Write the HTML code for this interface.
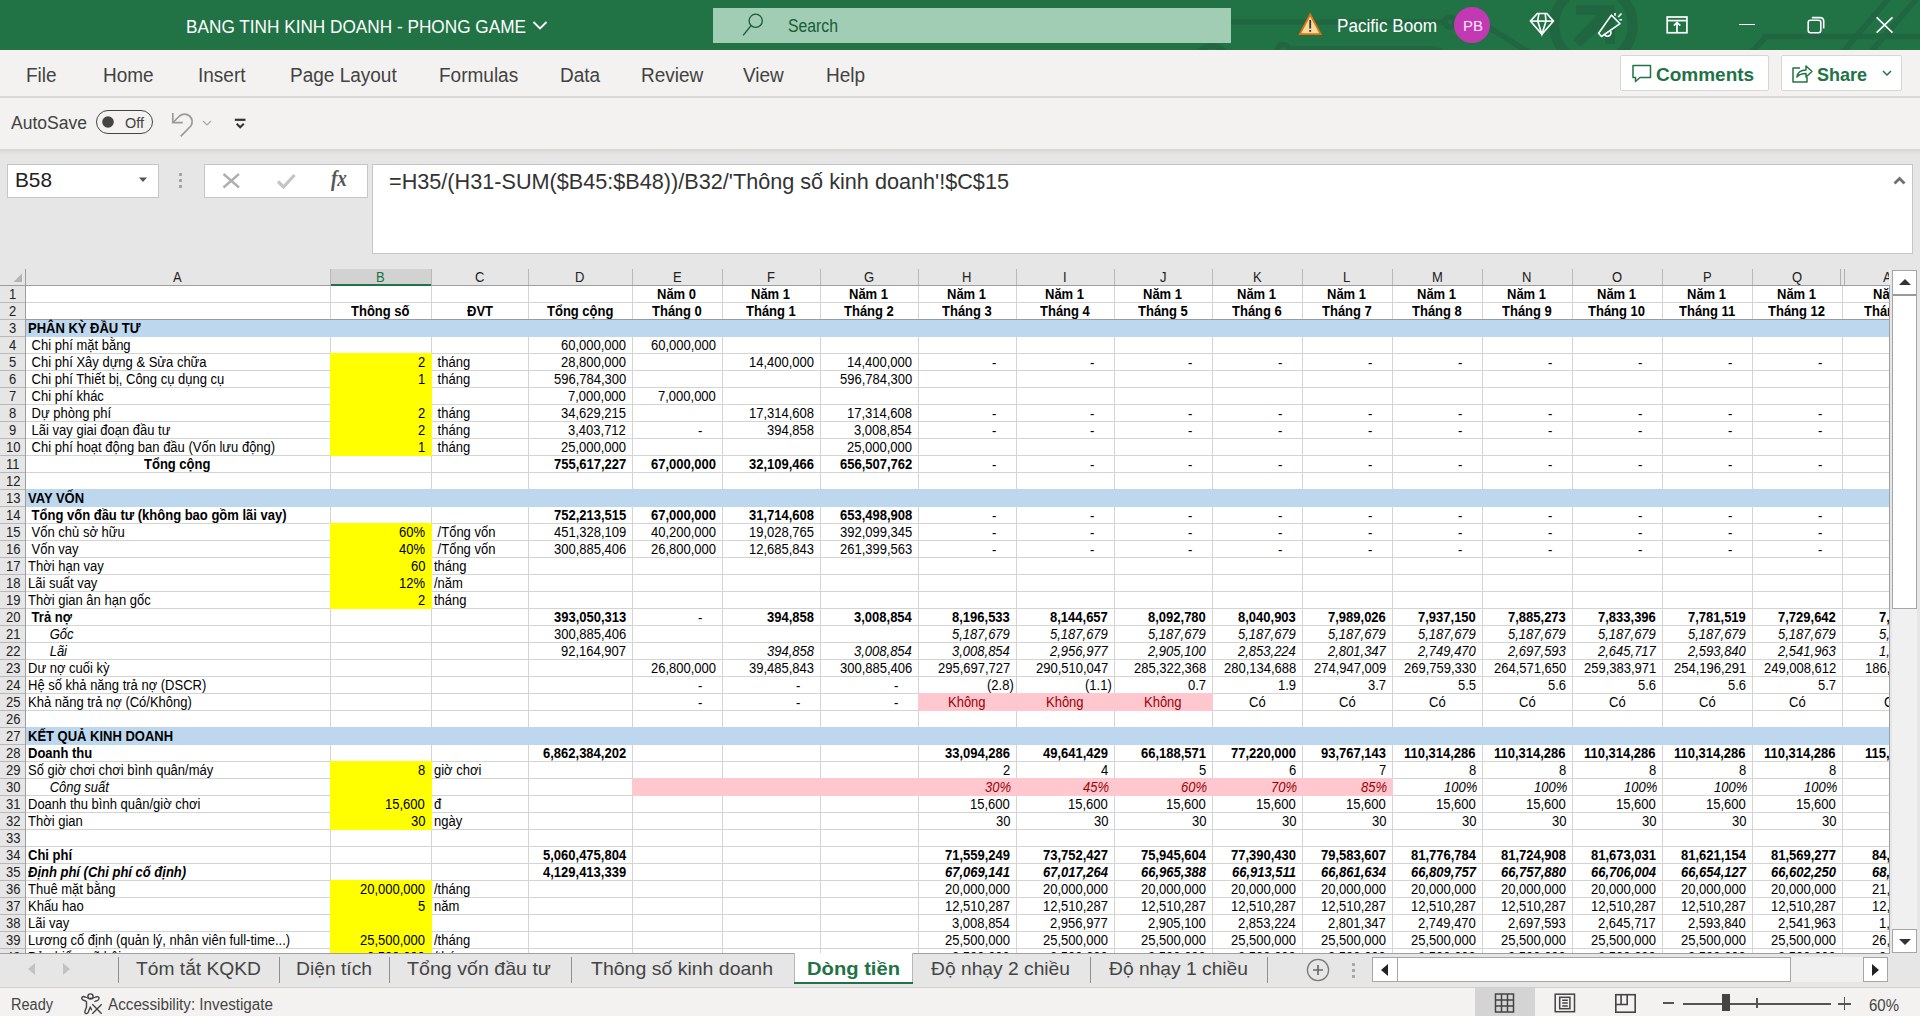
<!DOCTYPE html>
<html><head><meta charset="utf-8"><title>Excel</title><style>
*{margin:0;padding:0;box-sizing:border-box}
html,body{width:1920px;height:1016px;overflow:hidden;background:#f3f2f1;font-family:"Liberation Sans",sans-serif}
.r{position:absolute;display:block}
.t{position:absolute;white-space:pre}
</style></head>
<body>
<div class="r" style="left:0px;top:0px;width:1920px;height:50px;background:#217346;"></div><svg class="r" style="left:0px;top:0px" width="1920" height="50" viewBox="0 0 1920 50"><g stroke="#206640" stroke-width="5.5" fill="none"><path d="M1225 21.9 H1444"/><circle cx="1450" cy="21.9" r="5"/><path d="M1488 27 L1535 56"/><circle cx="1212" cy="64" r="18"/><circle cx="1283" cy="50" r="5.5"/><path d="M1289 49 H1430 Q1440 49 1446 56"/><path d="M1762 36.6 H1925 M1766 36.6 L1748 56"/><path d="M1890 -3 L1842 53 M1918 -3 L1870 53"/></g><circle cx="1593.5" cy="25" r="39.3" stroke="#206640" stroke-width="10" fill="none"/><path d="M1576 5.2 H1614.8 V43.75 H1605.2 V24 L1580.4 46.9 L1573.4 39.6 L1597 14.8 H1576 Z" fill="#206640"/></svg><div class="t" style="left:186.00px;top:17px;font-size:18px;line-height:20px;color:#fff;font-weight:normal;font-style:normal;transform:scaleX(0.9559);transform-origin:0 0;">BANG TINH KINH DOANH - PHONG GAME</div><svg class="r" style="left:530px;top:18px" width="20" height="14" viewBox="0 0 20 14"><path d="M3.5 4 L10 10.5 L16.5 4" stroke="#fff" stroke-width="1.8" fill="none"/></svg><div class="r" style="left:713px;top:8px;width:518px;height:35px;background:#a0cdb4;"></div><svg class="r" style="left:740px;top:12px" width="28" height="28" viewBox="0 0 28 28"><circle cx="15.7" cy="8.8" r="6.6" stroke="#185c34" stroke-width="1.3" fill="none"/><path d="M11 13.6 L3.2 23.4" stroke="#185c34" stroke-width="1.4"/></svg><div class="t" style="left:788.00px;top:16px;font-size:17.5px;line-height:20px;color:#185c34;font-weight:normal;font-style:normal;transform:scaleX(0.9017);transform-origin:0 0;">Search</div><svg class="r" style="left:1290px;top:5px" width="40" height="40" viewBox="0 0 40 40"><path d="M20.2 9.5 L30.6 29.2 L9.8 29.2 Z" fill="#f7da9a" stroke="#dc7314" stroke-width="1.8" stroke-linejoin="miter"/><path d="M20.2 15 V23.5" stroke="#333" stroke-width="1.8"/><rect x="19.3" y="25" width="1.8" height="1.8" fill="#333"/></svg><div class="t" style="left:1337.00px;top:16px;font-size:18px;line-height:20px;color:#fff;font-weight:normal;font-style:normal;transform:scaleX(0.9520);transform-origin:0 0;">Pacific Boom</div><svg class="r" style="left:1454px;top:7px" width="36" height="36" viewBox="0 0 36 36"><circle cx="18" cy="18" r="18" fill="#c239b3"/></svg><div class="t" style="left:1462.50px;top:18px;font-size:14.5px;line-height:16px;color:#fde6fa;font-weight:normal;font-style:normal;transform:scaleX(1.0340);transform-origin:0 0;">PB</div><svg class="r" style="left:1520px;top:5px" width="40" height="40" viewBox="0 0 40 40"><g stroke="#fff" stroke-width="1.6" fill="none" stroke-linejoin="miter"><path d="M17.3 8.5 H26.8 L33.5 16.1 L21.9 29.3 L10.4 16.1 Z"/><path d="M10.4 16.1 H33.5"/><path d="M18.9 8.5 L17.7 16.1 L21.9 29.3 L26.0 16.1 L25.2 8.5"/></g></svg><svg class="r" style="left:1590px;top:5px" width="40" height="40" viewBox="0 0 40 40"><g stroke="#fff" stroke-width="1.6" fill="none" stroke-linejoin="round"><path d="M21.4 10.1 L30 18.7 L11.5 31.5 L8.6 28.3 Z"/><path d="M14.5 29.5 A3.2 3.2 0 1 0 20.5 26"/><path d="M25 8 V10.8 M28.2 12 L31.5 8.5 M29.5 14.8 H32"/></g></svg><svg class="r" style="left:1660px;top:5px" width="40" height="40" viewBox="0 0 40 40"><g stroke="#fff" stroke-width="1.7" fill="none"><rect x="7.2" y="12" width="19.7" height="15.75"/><path d="M7.2 15.6 H26.9"/><path d="M17 27.5 V17 M13.9 20.6 L17 17.4 L20.3 20.6"/></g></svg><div class="r" style="left:1739px;top:23.5px;width:16px;height:1.6px;background:#fff;"></div><svg class="r" style="left:1800px;top:5px" width="40" height="40" viewBox="0 0 40 40"><g stroke="#fff" stroke-width="1.6" fill="none"><rect x="8.2" y="15.2" width="12.6" height="12.5" rx="2.2"/><path d="M11.9 12.6 H20 Q23.7 12.6 23.7 16.3 V23.6"/></g></svg><svg class="r" style="left:1870px;top:10px" width="30" height="30" viewBox="0 0 30 30"><path d="M6.6 7.4 L22.5 22.7 M22.5 7.4 L6.6 22.7" stroke="#fff" stroke-width="1.6"/></svg><div class="r" style="left:0px;top:50px;width:1920px;height:47px;background:#f3f2f1;"></div><div class="t" style="left:26.00px;top:64px;font-size:19.5px;line-height:22px;color:#424242;font-weight:normal;font-style:normal;transform:scaleX(0.9744);transform-origin:0 0;">File</div><div class="t" style="left:103.00px;top:64px;font-size:19.5px;line-height:22px;color:#424242;font-weight:normal;font-style:normal;transform:scaleX(0.9744);transform-origin:0 0;">Home</div><div class="t" style="left:198.00px;top:64px;font-size:19.5px;line-height:22px;color:#424242;font-weight:normal;font-style:normal;transform:scaleX(0.9744);transform-origin:0 0;">Insert</div><div class="t" style="left:290.00px;top:64px;font-size:19.5px;line-height:22px;color:#424242;font-weight:normal;font-style:normal;transform:scaleX(0.9744);transform-origin:0 0;">Page Layout</div><div class="t" style="left:439.00px;top:64px;font-size:19.5px;line-height:22px;color:#424242;font-weight:normal;font-style:normal;transform:scaleX(0.9744);transform-origin:0 0;">Formulas</div><div class="t" style="left:560.00px;top:64px;font-size:19.5px;line-height:22px;color:#424242;font-weight:normal;font-style:normal;transform:scaleX(0.9744);transform-origin:0 0;">Data</div><div class="t" style="left:641.00px;top:64px;font-size:19.5px;line-height:22px;color:#424242;font-weight:normal;font-style:normal;transform:scaleX(0.9744);transform-origin:0 0;">Review</div><div class="t" style="left:743.00px;top:64px;font-size:19.5px;line-height:22px;color:#424242;font-weight:normal;font-style:normal;transform:scaleX(0.9744);transform-origin:0 0;">View</div><div class="t" style="left:826.00px;top:64px;font-size:19.5px;line-height:22px;color:#424242;font-weight:normal;font-style:normal;transform:scaleX(0.9744);transform-origin:0 0;">Help</div><div class="r" style="left:1620px;top:55px;width:149px;height:36px;background:#fff;border:1px solid #d9d7d5;border-radius:2px"></div><svg class="r" style="left:1630px;top:62px" width="24" height="22" viewBox="0 0 24 22"><path d="M3 3.5 H20.5 V15.5 H10 L5.5 19.5 V15.5 H3 Z" stroke="#217346" stroke-width="1.5" fill="none" stroke-linejoin="round"/></svg><div class="t" style="left:1656.00px;top:64px;font-size:19px;line-height:21px;color:#217346;font-weight:bold;font-style:normal;">Comments</div><div class="r" style="left:1781px;top:55px;width:121px;height:36px;background:#fff;border:1px solid #d9d7d5;border-radius:2px"></div><svg class="r" style="left:1789px;top:61px" width="26" height="24" viewBox="0 0 26 24"><g stroke="#217346" stroke-width="1.5" fill="none" stroke-linejoin="round"><path d="M11 7 H4 V21 H18 V16"/><path d="M8 16 Q9 9 17 9 V5 L23 10.5 L17 16 V12.5 Q11 12.5 8 16 Z"/></g></svg><div class="t" style="left:1817.00px;top:64px;font-size:19px;line-height:21px;color:#217346;font-weight:bold;font-style:normal;transform:scaleX(0.9468);transform-origin:0 0;">Share</div><svg class="r" style="left:1880px;top:68px" width="14" height="10" viewBox="0 0 14 10"><path d="M3 3 L7 7 L11 3" stroke="#217346" stroke-width="1.5" fill="none"/></svg><div class="r" style="left:0px;top:96px;width:1920px;height:2px;background:#dad8d6;"></div><div class="r" style="left:0px;top:98px;width:1920px;height:51px;background:#f3f2f1;"></div><div class="t" style="left:11.00px;top:113px;font-size:18px;line-height:20px;color:#424242;font-weight:normal;font-style:normal;transform:scaleX(0.9737);transform-origin:0 0;">AutoSave</div><div class="r" style="left:96px;top:110px;width:57px;height:24px;background:transparent;border:1.3px solid #444;border-radius:12px"></div><svg class="r" style="left:102px;top:116px" width="12" height="12" viewBox="0 0 12 12"><circle cx="6" cy="6" r="5.8" fill="#444"/></svg><div class="t" style="left:125.00px;top:115px;font-size:14px;line-height:16px;color:#424242;font-weight:normal;font-style:normal;transform:scaleX(1.0317);transform-origin:0 0;">Off</div><svg class="r" style="left:160px;top:100px" width="40" height="45" viewBox="0 0 40 45"><g stroke="#9a9a9a" stroke-width="1.7" fill="none"><path d="M12.8 13 V22.7 H22.8"/><path d="M13.5 22 L19.5 16 A7.6 7.6 0 0 1 30.8 26 L20.7 36.3"/></g></svg><svg class="r" style="left:201px;top:118px" width="12" height="10" viewBox="0 0 12 10"><path d="M2 3 L6 7 L10 3" stroke="#a8a8a8" stroke-width="1.2" fill="none"/></svg><svg class="r" style="left:230px;top:110px" width="20" height="20" viewBox="0 0 20 20"><g stroke="#333" fill="none"><path d="M4.8 9.8 H15.5" stroke-width="2.2"/><path d="M6.7 13.7 L10.2 17.3 L13.8 13.7" stroke-width="2"/></g></svg><div class="r" style="left:0;top:149px;width:1920px;height:8px;background:linear-gradient(#d4d4d4,#e6e6e6)"></div><div class="r" style="left:0px;top:149px;width:1920px;height:120px;background:#e6e6e6;"></div><div class="r" style="left:0;top:149px;width:1920px;height:6px;background:linear-gradient(#d6d6d6,#e6e6e6)"></div><div class="r" style="left:7px;top:164px;width:152px;height:34px;background:#fff;border:1px solid #c6c6c6"></div><div class="t" style="left:15.00px;top:168px;font-size:21px;line-height:23px;color:#222;font-weight:normal;font-style:normal;transform:scaleX(0.9902);transform-origin:0 0;">B58</div><svg class="r" style="left:138px;top:176px" width="12" height="8" viewBox="0 0 12 8"><path d="M1 1.5 H9 L5 6 Z" fill="#555"/></svg><div class="r" style="left:179px;top:173px;width:3px;height:3px;background:#a5a5a5;"></div><div class="r" style="left:179px;top:179px;width:3px;height:3px;background:#a5a5a5;"></div><div class="r" style="left:179px;top:185px;width:3px;height:3px;background:#a5a5a5;"></div><div class="r" style="left:204px;top:164px;width:164px;height:34px;background:#fff;border:1px solid #c6c6c6"></div><svg class="r" style="left:220px;top:170px" width="24" height="22" viewBox="0 0 24 22"><path d="M3.5 4 L19 17.5 M19 4 L3.5 17.5" stroke="#b0b0b0" stroke-width="2.4"/></svg><svg class="r" style="left:273px;top:170px" width="28" height="24" viewBox="0 0 28 24"><path d="M5 11.5 L10.5 17 L21.5 5" stroke="#c4c4c4" stroke-width="3.2" fill="none"/></svg><div class="t" style="left:331.00px;top:166px;font-size:23px;line-height:26px;color:#555;font-weight:bold;font-style:italic;transform:scaleX(0.8313);transform-origin:0 0;font-family:'Liberation Serif';">fx</div><div class="r" style="left:372px;top:164px;width:1541px;height:90px;background:#fff;border:1px solid #c6c6c6"></div><div class="t" style="left:389.00px;top:169px;font-size:22.5px;line-height:25px;color:#333;font-weight:normal;font-style:normal;transform:scaleX(0.9618);transform-origin:0 0;">=H35/(H31-SUM($B45:$B48))/B32/&#x27;Thông số kinh doanh&#x27;!$C$15</div><svg class="r" style="left:1892px;top:175px" width="16" height="12" viewBox="0 0 16 12"><path d="M2.5 8.5 L7.5 3.5 L12.5 8.5" stroke="#707070" stroke-width="2.8" fill="none"/></svg><div class="r" style="left:0px;top:269px;width:1889px;height:685px;overflow:hidden;background:#fff"><div class="r" style="left:0px;top:0px;width:1889px;height:16px;background:#e6e6e6;"></div><div class="r" style="left:0px;top:0px;width:25px;height:685px;background:#e6e6e6;"></div><div class="r" style="left:331px;top:0px;width:100px;height:16px;background:#d2d2d2;"></div><div class="r" style="left:330px;top:16px;width:1px;height:669px;background:#d4d4d4;"></div><div class="r" style="left:431px;top:16px;width:1px;height:669px;background:#d4d4d4;"></div><div class="r" style="left:528px;top:16px;width:1px;height:669px;background:#d4d4d4;"></div><div class="r" style="left:632px;top:16px;width:1px;height:669px;background:#d4d4d4;"></div><div class="r" style="left:722px;top:16px;width:1px;height:669px;background:#d4d4d4;"></div><div class="r" style="left:820px;top:16px;width:1px;height:669px;background:#d4d4d4;"></div><div class="r" style="left:918px;top:16px;width:1px;height:669px;background:#d4d4d4;"></div><div class="r" style="left:1016px;top:16px;width:1px;height:669px;background:#d4d4d4;"></div><div class="r" style="left:1114px;top:16px;width:1px;height:669px;background:#d4d4d4;"></div><div class="r" style="left:1212px;top:16px;width:1px;height:669px;background:#d4d4d4;"></div><div class="r" style="left:1302px;top:16px;width:1px;height:669px;background:#d4d4d4;"></div><div class="r" style="left:1392px;top:16px;width:1px;height:669px;background:#d4d4d4;"></div><div class="r" style="left:1482px;top:16px;width:1px;height:669px;background:#d4d4d4;"></div><div class="r" style="left:1572px;top:16px;width:1px;height:669px;background:#d4d4d4;"></div><div class="r" style="left:1662px;top:16px;width:1px;height:669px;background:#d4d4d4;"></div><div class="r" style="left:1752px;top:16px;width:1px;height:669px;background:#d4d4d4;"></div><div class="r" style="left:1842px;top:16px;width:1px;height:669px;background:#d4d4d4;"></div><div class="r" style="left:25px;top:33px;width:1864px;height:1px;background:#d4d4d4;"></div><div class="r" style="left:25px;top:50px;width:1864px;height:1px;background:#d4d4d4;"></div><div class="r" style="left:25px;top:67px;width:1864px;height:1px;background:#d4d4d4;"></div><div class="r" style="left:25px;top:84px;width:1864px;height:1px;background:#d4d4d4;"></div><div class="r" style="left:25px;top:101px;width:1864px;height:1px;background:#d4d4d4;"></div><div class="r" style="left:25px;top:118px;width:1864px;height:1px;background:#d4d4d4;"></div><div class="r" style="left:25px;top:135px;width:1864px;height:1px;background:#d4d4d4;"></div><div class="r" style="left:25px;top:152px;width:1864px;height:1px;background:#d4d4d4;"></div><div class="r" style="left:25px;top:169px;width:1864px;height:1px;background:#d4d4d4;"></div><div class="r" style="left:25px;top:186px;width:1864px;height:1px;background:#d4d4d4;"></div><div class="r" style="left:25px;top:203px;width:1864px;height:1px;background:#d4d4d4;"></div><div class="r" style="left:25px;top:220px;width:1864px;height:1px;background:#d4d4d4;"></div><div class="r" style="left:25px;top:237px;width:1864px;height:1px;background:#d4d4d4;"></div><div class="r" style="left:25px;top:254px;width:1864px;height:1px;background:#d4d4d4;"></div><div class="r" style="left:25px;top:271px;width:1864px;height:1px;background:#d4d4d4;"></div><div class="r" style="left:25px;top:288px;width:1864px;height:1px;background:#d4d4d4;"></div><div class="r" style="left:25px;top:305px;width:1864px;height:1px;background:#d4d4d4;"></div><div class="r" style="left:25px;top:322px;width:1864px;height:1px;background:#d4d4d4;"></div><div class="r" style="left:25px;top:339px;width:1864px;height:1px;background:#d4d4d4;"></div><div class="r" style="left:25px;top:356px;width:1864px;height:1px;background:#d4d4d4;"></div><div class="r" style="left:25px;top:373px;width:1864px;height:1px;background:#d4d4d4;"></div><div class="r" style="left:25px;top:390px;width:1864px;height:1px;background:#d4d4d4;"></div><div class="r" style="left:25px;top:407px;width:1864px;height:1px;background:#d4d4d4;"></div><div class="r" style="left:25px;top:424px;width:1864px;height:1px;background:#d4d4d4;"></div><div class="r" style="left:25px;top:441px;width:1864px;height:1px;background:#d4d4d4;"></div><div class="r" style="left:25px;top:458px;width:1864px;height:1px;background:#d4d4d4;"></div><div class="r" style="left:25px;top:475px;width:1864px;height:1px;background:#d4d4d4;"></div><div class="r" style="left:25px;top:492px;width:1864px;height:1px;background:#d4d4d4;"></div><div class="r" style="left:25px;top:509px;width:1864px;height:1px;background:#d4d4d4;"></div><div class="r" style="left:25px;top:526px;width:1864px;height:1px;background:#d4d4d4;"></div><div class="r" style="left:25px;top:543px;width:1864px;height:1px;background:#d4d4d4;"></div><div class="r" style="left:25px;top:560px;width:1864px;height:1px;background:#d4d4d4;"></div><div class="r" style="left:25px;top:577px;width:1864px;height:1px;background:#d4d4d4;"></div><div class="r" style="left:25px;top:594px;width:1864px;height:1px;background:#d4d4d4;"></div><div class="r" style="left:25px;top:611px;width:1864px;height:1px;background:#d4d4d4;"></div><div class="r" style="left:25px;top:628px;width:1864px;height:1px;background:#d4d4d4;"></div><div class="r" style="left:25px;top:645px;width:1864px;height:1px;background:#d4d4d4;"></div><div class="r" style="left:25px;top:662px;width:1864px;height:1px;background:#d4d4d4;"></div><div class="r" style="left:25px;top:679px;width:1864px;height:1px;background:#d4d4d4;"></div><div class="r" style="left:25px;top:696px;width:1864px;height:1px;background:#d4d4d4;"></div><div class="r" style="left:330px;top:84px;width:102px;height:18px;background:#ffff00;"></div><div class="r" style="left:330px;top:101px;width:102px;height:18px;background:#ffff00;"></div><div class="r" style="left:330px;top:118px;width:102px;height:18px;background:#ffff00;"></div><div class="r" style="left:330px;top:135px;width:102px;height:18px;background:#ffff00;"></div><div class="r" style="left:330px;top:152px;width:102px;height:18px;background:#ffff00;"></div><div class="r" style="left:330px;top:169px;width:102px;height:18px;background:#ffff00;"></div><div class="r" style="left:330px;top:254px;width:102px;height:18px;background:#ffff00;"></div><div class="r" style="left:330px;top:271px;width:102px;height:18px;background:#ffff00;"></div><div class="r" style="left:330px;top:288px;width:102px;height:18px;background:#ffff00;"></div><div class="r" style="left:330px;top:305px;width:102px;height:18px;background:#ffff00;"></div><div class="r" style="left:330px;top:322px;width:102px;height:18px;background:#ffff00;"></div><div class="r" style="left:330px;top:492px;width:102px;height:18px;background:#ffff00;"></div><div class="r" style="left:330px;top:509px;width:102px;height:18px;background:#ffff00;"></div><div class="r" style="left:330px;top:526px;width:102px;height:18px;background:#ffff00;"></div><div class="r" style="left:330px;top:543px;width:102px;height:18px;background:#ffff00;"></div><div class="r" style="left:330px;top:611px;width:102px;height:18px;background:#ffff00;"></div><div class="r" style="left:330px;top:628px;width:102px;height:18px;background:#ffff00;"></div><div class="r" style="left:330px;top:645px;width:102px;height:18px;background:#ffff00;"></div><div class="r" style="left:330px;top:662px;width:102px;height:18px;background:#ffff00;"></div><div class="r" style="left:330px;top:679px;width:102px;height:18px;background:#ffff00;"></div><div class="r" style="left:918px;top:424px;width:99px;height:18px;background:#ffc7ce;"></div><div class="r" style="left:1016px;top:424px;width:99px;height:18px;background:#ffc7ce;"></div><div class="r" style="left:1114px;top:424px;width:99px;height:18px;background:#ffc7ce;"></div><div class="r" style="left:632px;top:509px;width:91px;height:18px;background:#ffc7ce;"></div><div class="r" style="left:722px;top:509px;width:99px;height:18px;background:#ffc7ce;"></div><div class="r" style="left:820px;top:509px;width:99px;height:18px;background:#ffc7ce;"></div><div class="r" style="left:918px;top:509px;width:99px;height:18px;background:#ffc7ce;"></div><div class="r" style="left:1016px;top:509px;width:99px;height:18px;background:#ffc7ce;"></div><div class="r" style="left:1114px;top:509px;width:99px;height:18px;background:#ffc7ce;"></div><div class="r" style="left:1212px;top:509px;width:91px;height:18px;background:#ffc7ce;"></div><div class="r" style="left:1302px;top:509px;width:91px;height:18px;background:#ffc7ce;"></div><div class="r" style="left:25px;top:50px;width:1864px;height:18px;background:#bdd7ee;"></div><div class="r" style="left:25px;top:220px;width:1864px;height:18px;background:#bdd7ee;"></div><div class="r" style="left:25px;top:458px;width:1864px;height:18px;background:#bdd7ee;"></div><div class="r" style="left:25px;top:50px;width:1864px;height:1px;background:#9b9b9b;"></div><div class="r" style="left:330px;top:0px;width:1px;height:16px;background:#b9b9b9;"></div><div class="r" style="left:431px;top:0px;width:1px;height:16px;background:#b9b9b9;"></div><div class="r" style="left:528px;top:0px;width:1px;height:16px;background:#b9b9b9;"></div><div class="r" style="left:632px;top:0px;width:1px;height:16px;background:#b9b9b9;"></div><div class="r" style="left:722px;top:0px;width:1px;height:16px;background:#b9b9b9;"></div><div class="r" style="left:820px;top:0px;width:1px;height:16px;background:#b9b9b9;"></div><div class="r" style="left:918px;top:0px;width:1px;height:16px;background:#b9b9b9;"></div><div class="r" style="left:1016px;top:0px;width:1px;height:16px;background:#b9b9b9;"></div><div class="r" style="left:1114px;top:0px;width:1px;height:16px;background:#b9b9b9;"></div><div class="r" style="left:1212px;top:0px;width:1px;height:16px;background:#b9b9b9;"></div><div class="r" style="left:1302px;top:0px;width:1px;height:16px;background:#b9b9b9;"></div><div class="r" style="left:1392px;top:0px;width:1px;height:16px;background:#b9b9b9;"></div><div class="r" style="left:1482px;top:0px;width:1px;height:16px;background:#b9b9b9;"></div><div class="r" style="left:1572px;top:0px;width:1px;height:16px;background:#b9b9b9;"></div><div class="r" style="left:1662px;top:0px;width:1px;height:16px;background:#b9b9b9;"></div><div class="r" style="left:1752px;top:0px;width:1px;height:16px;background:#b9b9b9;"></div><div class="r" style="left:1840px;top:0px;width:1px;height:16px;background:#b0b0b0;"></div><div class="r" style="left:1844px;top:0px;width:1px;height:16px;background:#b0b0b0;"></div><div class="r" style="left:0px;top:33px;width:25px;height:1px;background:#b9b9b9;"></div><div class="r" style="left:0px;top:50px;width:25px;height:1px;background:#b9b9b9;"></div><div class="r" style="left:0px;top:67px;width:25px;height:1px;background:#b9b9b9;"></div><div class="r" style="left:0px;top:84px;width:25px;height:1px;background:#b9b9b9;"></div><div class="r" style="left:0px;top:101px;width:25px;height:1px;background:#b9b9b9;"></div><div class="r" style="left:0px;top:118px;width:25px;height:1px;background:#b9b9b9;"></div><div class="r" style="left:0px;top:135px;width:25px;height:1px;background:#b9b9b9;"></div><div class="r" style="left:0px;top:152px;width:25px;height:1px;background:#b9b9b9;"></div><div class="r" style="left:0px;top:169px;width:25px;height:1px;background:#b9b9b9;"></div><div class="r" style="left:0px;top:186px;width:25px;height:1px;background:#b9b9b9;"></div><div class="r" style="left:0px;top:203px;width:25px;height:1px;background:#b9b9b9;"></div><div class="r" style="left:0px;top:220px;width:25px;height:1px;background:#b9b9b9;"></div><div class="r" style="left:0px;top:237px;width:25px;height:1px;background:#b9b9b9;"></div><div class="r" style="left:0px;top:254px;width:25px;height:1px;background:#b9b9b9;"></div><div class="r" style="left:0px;top:271px;width:25px;height:1px;background:#b9b9b9;"></div><div class="r" style="left:0px;top:288px;width:25px;height:1px;background:#b9b9b9;"></div><div class="r" style="left:0px;top:305px;width:25px;height:1px;background:#b9b9b9;"></div><div class="r" style="left:0px;top:322px;width:25px;height:1px;background:#b9b9b9;"></div><div class="r" style="left:0px;top:339px;width:25px;height:1px;background:#b9b9b9;"></div><div class="r" style="left:0px;top:356px;width:25px;height:1px;background:#b9b9b9;"></div><div class="r" style="left:0px;top:373px;width:25px;height:1px;background:#b9b9b9;"></div><div class="r" style="left:0px;top:390px;width:25px;height:1px;background:#b9b9b9;"></div><div class="r" style="left:0px;top:407px;width:25px;height:1px;background:#b9b9b9;"></div><div class="r" style="left:0px;top:424px;width:25px;height:1px;background:#b9b9b9;"></div><div class="r" style="left:0px;top:441px;width:25px;height:1px;background:#b9b9b9;"></div><div class="r" style="left:0px;top:458px;width:25px;height:1px;background:#b9b9b9;"></div><div class="r" style="left:0px;top:475px;width:25px;height:1px;background:#b9b9b9;"></div><div class="r" style="left:0px;top:492px;width:25px;height:1px;background:#b9b9b9;"></div><div class="r" style="left:0px;top:509px;width:25px;height:1px;background:#b9b9b9;"></div><div class="r" style="left:0px;top:526px;width:25px;height:1px;background:#b9b9b9;"></div><div class="r" style="left:0px;top:543px;width:25px;height:1px;background:#b9b9b9;"></div><div class="r" style="left:0px;top:560px;width:25px;height:1px;background:#b9b9b9;"></div><div class="r" style="left:0px;top:577px;width:25px;height:1px;background:#b9b9b9;"></div><div class="r" style="left:0px;top:594px;width:25px;height:1px;background:#b9b9b9;"></div><div class="r" style="left:0px;top:611px;width:25px;height:1px;background:#b9b9b9;"></div><div class="r" style="left:0px;top:628px;width:25px;height:1px;background:#b9b9b9;"></div><div class="r" style="left:0px;top:645px;width:25px;height:1px;background:#b9b9b9;"></div><div class="r" style="left:0px;top:662px;width:25px;height:1px;background:#b9b9b9;"></div><div class="r" style="left:0px;top:679px;width:25px;height:1px;background:#b9b9b9;"></div><div class="r" style="left:0px;top:696px;width:25px;height:1px;background:#b9b9b9;"></div><div class="r" style="left:25px;top:0px;width:1px;height:685px;background:#9e9e9e;"></div><div class="r" style="left:0px;top:16px;width:1889px;height:1px;background:#9e9e9e;"></div><div class="r" style="left:331px;top:15px;width:100px;height:2px;background:#217346;"></div><svg class="r" style="left:12px;top:3px" width="12" height="12" viewBox="0 0 12 12"><path d="M10 1.5 V10 H1.5 Z" fill="#b4b4b4"/></svg><div class="t" style="left:173.16px;top:1px;font-size:13.8px;line-height:15px;color:#222;font-weight:normal;font-style:normal;transform:scaleX(0.9420);transform-origin:0 0;">A</div><div class="t" style="left:376.16px;top:1px;font-size:13.8px;line-height:15px;color:#217346;font-weight:normal;font-style:normal;transform:scaleX(0.9420);transform-origin:0 0;">B</div><div class="t" style="left:474.81px;top:1px;font-size:13.8px;line-height:15px;color:#222;font-weight:normal;font-style:normal;transform:scaleX(0.9420);transform-origin:0 0;">C</div><div class="t" style="left:575.31px;top:1px;font-size:13.8px;line-height:15px;color:#222;font-weight:normal;font-style:normal;transform:scaleX(0.9420);transform-origin:0 0;">D</div><div class="t" style="left:672.66px;top:1px;font-size:13.8px;line-height:15px;color:#222;font-weight:normal;font-style:normal;transform:scaleX(0.9420);transform-origin:0 0;">E</div><div class="t" style="left:767.03px;top:1px;font-size:13.8px;line-height:15px;color:#222;font-weight:normal;font-style:normal;transform:scaleX(0.9420);transform-origin:0 0;">F</div><div class="t" style="left:863.94px;top:1px;font-size:13.8px;line-height:15px;color:#222;font-weight:normal;font-style:normal;transform:scaleX(0.9420);transform-origin:0 0;">G</div><div class="t" style="left:962.31px;top:1px;font-size:13.8px;line-height:15px;color:#222;font-weight:normal;font-style:normal;transform:scaleX(0.9420);transform-origin:0 0;">H</div><div class="t" style="left:1063.19px;top:1px;font-size:13.8px;line-height:15px;color:#222;font-weight:normal;font-style:normal;transform:scaleX(0.9420);transform-origin:0 0;">I</div><div class="t" style="left:1159.75px;top:1px;font-size:13.8px;line-height:15px;color:#222;font-weight:normal;font-style:normal;transform:scaleX(0.9420);transform-origin:0 0;">J</div><div class="t" style="left:1252.66px;top:1px;font-size:13.8px;line-height:15px;color:#222;font-weight:normal;font-style:normal;transform:scaleX(0.9420);transform-origin:0 0;">K</div><div class="t" style="left:1343.38px;top:1px;font-size:13.8px;line-height:15px;color:#222;font-weight:normal;font-style:normal;transform:scaleX(0.9420);transform-origin:0 0;">L</div><div class="t" style="left:1431.59px;top:1px;font-size:13.8px;line-height:15px;color:#222;font-weight:normal;font-style:normal;transform:scaleX(0.9420);transform-origin:0 0;">M</div><div class="t" style="left:1522.31px;top:1px;font-size:13.8px;line-height:15px;color:#222;font-weight:normal;font-style:normal;transform:scaleX(0.9420);transform-origin:0 0;">N</div><div class="t" style="left:1611.94px;top:1px;font-size:13.8px;line-height:15px;color:#222;font-weight:normal;font-style:normal;transform:scaleX(0.9420);transform-origin:0 0;">O</div><div class="t" style="left:1702.66px;top:1px;font-size:13.8px;line-height:15px;color:#222;font-weight:normal;font-style:normal;transform:scaleX(0.9420);transform-origin:0 0;">P</div><div class="t" style="left:1791.94px;top:1px;font-size:13.8px;line-height:15px;color:#222;font-weight:normal;font-style:normal;transform:scaleX(0.9420);transform-origin:0 0;">Q</div><div class="t" style="left:1883.47px;top:1px;font-size:13.8px;line-height:15px;color:#222;font-weight:normal;font-style:normal;transform:scaleX(0.9420);transform-origin:0 0;">AD</div><div class="t" style="left:9.38px;top:18px;font-size:13.8px;line-height:15px;color:#222;font-weight:normal;font-style:normal;transform:scaleX(0.9420);transform-origin:0 0;">1</div><div class="t" style="left:9.38px;top:35px;font-size:13.8px;line-height:15px;color:#222;font-weight:normal;font-style:normal;transform:scaleX(0.9420);transform-origin:0 0;">2</div><div class="t" style="left:9.38px;top:52px;font-size:13.8px;line-height:15px;color:#222;font-weight:normal;font-style:normal;transform:scaleX(0.9420);transform-origin:0 0;">3</div><div class="t" style="left:9.38px;top:69px;font-size:13.8px;line-height:15px;color:#222;font-weight:normal;font-style:normal;transform:scaleX(0.9420);transform-origin:0 0;">4</div><div class="t" style="left:9.38px;top:86px;font-size:13.8px;line-height:15px;color:#222;font-weight:normal;font-style:normal;transform:scaleX(0.9420);transform-origin:0 0;">5</div><div class="t" style="left:9.38px;top:103px;font-size:13.8px;line-height:15px;color:#222;font-weight:normal;font-style:normal;transform:scaleX(0.9420);transform-origin:0 0;">6</div><div class="t" style="left:9.38px;top:120px;font-size:13.8px;line-height:15px;color:#222;font-weight:normal;font-style:normal;transform:scaleX(0.9420);transform-origin:0 0;">7</div><div class="t" style="left:9.38px;top:137px;font-size:13.8px;line-height:15px;color:#222;font-weight:normal;font-style:normal;transform:scaleX(0.9420);transform-origin:0 0;">8</div><div class="t" style="left:9.38px;top:154px;font-size:13.8px;line-height:15px;color:#222;font-weight:normal;font-style:normal;transform:scaleX(0.9420);transform-origin:0 0;">9</div><div class="t" style="left:5.77px;top:171px;font-size:13.8px;line-height:15px;color:#222;font-weight:normal;font-style:normal;transform:scaleX(0.9420);transform-origin:0 0;">10</div><div class="t" style="left:6.25px;top:188px;font-size:13.8px;line-height:15px;color:#222;font-weight:normal;font-style:normal;transform:scaleX(0.9420);transform-origin:0 0;">11</div><div class="t" style="left:5.77px;top:205px;font-size:13.8px;line-height:15px;color:#222;font-weight:normal;font-style:normal;transform:scaleX(0.9420);transform-origin:0 0;">12</div><div class="t" style="left:5.77px;top:222px;font-size:13.8px;line-height:15px;color:#222;font-weight:normal;font-style:normal;transform:scaleX(0.9420);transform-origin:0 0;">13</div><div class="t" style="left:5.77px;top:239px;font-size:13.8px;line-height:15px;color:#222;font-weight:normal;font-style:normal;transform:scaleX(0.9420);transform-origin:0 0;">14</div><div class="t" style="left:5.77px;top:256px;font-size:13.8px;line-height:15px;color:#222;font-weight:normal;font-style:normal;transform:scaleX(0.9420);transform-origin:0 0;">15</div><div class="t" style="left:5.77px;top:273px;font-size:13.8px;line-height:15px;color:#222;font-weight:normal;font-style:normal;transform:scaleX(0.9420);transform-origin:0 0;">16</div><div class="t" style="left:5.77px;top:290px;font-size:13.8px;line-height:15px;color:#222;font-weight:normal;font-style:normal;transform:scaleX(0.9420);transform-origin:0 0;">17</div><div class="t" style="left:5.77px;top:307px;font-size:13.8px;line-height:15px;color:#222;font-weight:normal;font-style:normal;transform:scaleX(0.9420);transform-origin:0 0;">18</div><div class="t" style="left:5.77px;top:324px;font-size:13.8px;line-height:15px;color:#222;font-weight:normal;font-style:normal;transform:scaleX(0.9420);transform-origin:0 0;">19</div><div class="t" style="left:5.77px;top:341px;font-size:13.8px;line-height:15px;color:#222;font-weight:normal;font-style:normal;transform:scaleX(0.9420);transform-origin:0 0;">20</div><div class="t" style="left:5.77px;top:358px;font-size:13.8px;line-height:15px;color:#222;font-weight:normal;font-style:normal;transform:scaleX(0.9420);transform-origin:0 0;">21</div><div class="t" style="left:5.77px;top:375px;font-size:13.8px;line-height:15px;color:#222;font-weight:normal;font-style:normal;transform:scaleX(0.9420);transform-origin:0 0;">22</div><div class="t" style="left:5.77px;top:392px;font-size:13.8px;line-height:15px;color:#222;font-weight:normal;font-style:normal;transform:scaleX(0.9420);transform-origin:0 0;">23</div><div class="t" style="left:5.77px;top:409px;font-size:13.8px;line-height:15px;color:#222;font-weight:normal;font-style:normal;transform:scaleX(0.9420);transform-origin:0 0;">24</div><div class="t" style="left:5.77px;top:426px;font-size:13.8px;line-height:15px;color:#222;font-weight:normal;font-style:normal;transform:scaleX(0.9420);transform-origin:0 0;">25</div><div class="t" style="left:5.77px;top:443px;font-size:13.8px;line-height:15px;color:#222;font-weight:normal;font-style:normal;transform:scaleX(0.9420);transform-origin:0 0;">26</div><div class="t" style="left:5.77px;top:460px;font-size:13.8px;line-height:15px;color:#222;font-weight:normal;font-style:normal;transform:scaleX(0.9420);transform-origin:0 0;">27</div><div class="t" style="left:5.77px;top:477px;font-size:13.8px;line-height:15px;color:#222;font-weight:normal;font-style:normal;transform:scaleX(0.9420);transform-origin:0 0;">28</div><div class="t" style="left:5.77px;top:494px;font-size:13.8px;line-height:15px;color:#222;font-weight:normal;font-style:normal;transform:scaleX(0.9420);transform-origin:0 0;">29</div><div class="t" style="left:5.77px;top:511px;font-size:13.8px;line-height:15px;color:#222;font-weight:normal;font-style:normal;transform:scaleX(0.9420);transform-origin:0 0;">30</div><div class="t" style="left:5.77px;top:528px;font-size:13.8px;line-height:15px;color:#222;font-weight:normal;font-style:normal;transform:scaleX(0.9420);transform-origin:0 0;">31</div><div class="t" style="left:5.77px;top:545px;font-size:13.8px;line-height:15px;color:#222;font-weight:normal;font-style:normal;transform:scaleX(0.9420);transform-origin:0 0;">32</div><div class="t" style="left:5.77px;top:562px;font-size:13.8px;line-height:15px;color:#222;font-weight:normal;font-style:normal;transform:scaleX(0.9420);transform-origin:0 0;">33</div><div class="t" style="left:5.77px;top:579px;font-size:13.8px;line-height:15px;color:#222;font-weight:normal;font-style:normal;transform:scaleX(0.9420);transform-origin:0 0;">34</div><div class="t" style="left:5.77px;top:596px;font-size:13.8px;line-height:15px;color:#222;font-weight:normal;font-style:normal;transform:scaleX(0.9420);transform-origin:0 0;">35</div><div class="t" style="left:5.77px;top:613px;font-size:13.8px;line-height:15px;color:#222;font-weight:normal;font-style:normal;transform:scaleX(0.9420);transform-origin:0 0;">36</div><div class="t" style="left:5.77px;top:630px;font-size:13.8px;line-height:15px;color:#222;font-weight:normal;font-style:normal;transform:scaleX(0.9420);transform-origin:0 0;">37</div><div class="t" style="left:5.77px;top:647px;font-size:13.8px;line-height:15px;color:#222;font-weight:normal;font-style:normal;transform:scaleX(0.9420);transform-origin:0 0;">38</div><div class="t" style="left:5.77px;top:664px;font-size:13.8px;line-height:15px;color:#222;font-weight:normal;font-style:normal;transform:scaleX(0.9420);transform-origin:0 0;">39</div><div class="t" style="left:5.77px;top:681px;font-size:13.8px;line-height:15px;color:#222;font-weight:normal;font-style:normal;transform:scaleX(0.9420);transform-origin:0 0;">40</div><div class="t" style="left:657.49px;top:18px;font-size:13.8px;line-height:15px;color:#000;font-weight:bold;font-style:normal;transform:scaleX(0.9420);transform-origin:0 0;">Năm 0</div><div class="t" style="left:751.49px;top:18px;font-size:13.8px;line-height:15px;color:#000;font-weight:bold;font-style:normal;transform:scaleX(0.9420);transform-origin:0 0;">Năm 1</div><div class="t" style="left:849.49px;top:18px;font-size:13.8px;line-height:15px;color:#000;font-weight:bold;font-style:normal;transform:scaleX(0.9420);transform-origin:0 0;">Năm 1</div><div class="t" style="left:947.49px;top:18px;font-size:13.8px;line-height:15px;color:#000;font-weight:bold;font-style:normal;transform:scaleX(0.9420);transform-origin:0 0;">Năm 1</div><div class="t" style="left:1045.49px;top:18px;font-size:13.8px;line-height:15px;color:#000;font-weight:bold;font-style:normal;transform:scaleX(0.9420);transform-origin:0 0;">Năm 1</div><div class="t" style="left:1143.49px;top:18px;font-size:13.8px;line-height:15px;color:#000;font-weight:bold;font-style:normal;transform:scaleX(0.9420);transform-origin:0 0;">Năm 1</div><div class="t" style="left:1237.49px;top:18px;font-size:13.8px;line-height:15px;color:#000;font-weight:bold;font-style:normal;transform:scaleX(0.9420);transform-origin:0 0;">Năm 1</div><div class="t" style="left:1327.49px;top:18px;font-size:13.8px;line-height:15px;color:#000;font-weight:bold;font-style:normal;transform:scaleX(0.9420);transform-origin:0 0;">Năm 1</div><div class="t" style="left:1417.49px;top:18px;font-size:13.8px;line-height:15px;color:#000;font-weight:bold;font-style:normal;transform:scaleX(0.9420);transform-origin:0 0;">Năm 1</div><div class="t" style="left:1507.49px;top:18px;font-size:13.8px;line-height:15px;color:#000;font-weight:bold;font-style:normal;transform:scaleX(0.9420);transform-origin:0 0;">Năm 1</div><div class="t" style="left:1597.49px;top:18px;font-size:13.8px;line-height:15px;color:#000;font-weight:bold;font-style:normal;transform:scaleX(0.9420);transform-origin:0 0;">Năm 1</div><div class="t" style="left:1687.49px;top:18px;font-size:13.8px;line-height:15px;color:#000;font-weight:bold;font-style:normal;transform:scaleX(0.9420);transform-origin:0 0;">Năm 1</div><div class="t" style="left:1777.49px;top:18px;font-size:13.8px;line-height:15px;color:#000;font-weight:bold;font-style:normal;transform:scaleX(0.9420);transform-origin:0 0;">Năm 1</div><div class="t" style="left:1872.99px;top:18px;font-size:13.8px;line-height:15px;color:#000;font-weight:bold;font-style:normal;transform:scaleX(0.9420);transform-origin:0 0;">Năm 1</div><div class="t" style="left:351.26px;top:35px;font-size:13.8px;line-height:15px;color:#000;font-weight:bold;font-style:normal;transform:scaleX(0.9420);transform-origin:0 0;">Thông số</div><div class="t" style="left:466.50px;top:35px;font-size:13.8px;line-height:15px;color:#000;font-weight:bold;font-style:normal;transform:scaleX(0.9420);transform-origin:0 0;">ĐVT</div><div class="t" style="left:546.79px;top:35px;font-size:13.8px;line-height:15px;color:#000;font-weight:bold;font-style:normal;transform:scaleX(0.9420);transform-origin:0 0;">Tổng cộng</div><div class="t" style="left:652.08px;top:35px;font-size:13.8px;line-height:15px;color:#000;font-weight:bold;font-style:normal;transform:scaleX(0.9420);transform-origin:0 0;">Tháng 0</div><div class="t" style="left:746.08px;top:35px;font-size:13.8px;line-height:15px;color:#000;font-weight:bold;font-style:normal;transform:scaleX(0.9420);transform-origin:0 0;">Tháng 1</div><div class="t" style="left:844.08px;top:35px;font-size:13.8px;line-height:15px;color:#000;font-weight:bold;font-style:normal;transform:scaleX(0.9420);transform-origin:0 0;">Tháng 2</div><div class="t" style="left:942.08px;top:35px;font-size:13.8px;line-height:15px;color:#000;font-weight:bold;font-style:normal;transform:scaleX(0.9420);transform-origin:0 0;">Tháng 3</div><div class="t" style="left:1040.08px;top:35px;font-size:13.8px;line-height:15px;color:#000;font-weight:bold;font-style:normal;transform:scaleX(0.9420);transform-origin:0 0;">Tháng 4</div><div class="t" style="left:1138.08px;top:35px;font-size:13.8px;line-height:15px;color:#000;font-weight:bold;font-style:normal;transform:scaleX(0.9420);transform-origin:0 0;">Tháng 5</div><div class="t" style="left:1232.08px;top:35px;font-size:13.8px;line-height:15px;color:#000;font-weight:bold;font-style:normal;transform:scaleX(0.9420);transform-origin:0 0;">Tháng 6</div><div class="t" style="left:1322.08px;top:35px;font-size:13.8px;line-height:15px;color:#000;font-weight:bold;font-style:normal;transform:scaleX(0.9420);transform-origin:0 0;">Tháng 7</div><div class="t" style="left:1412.08px;top:35px;font-size:13.8px;line-height:15px;color:#000;font-weight:bold;font-style:normal;transform:scaleX(0.9420);transform-origin:0 0;">Tháng 8</div><div class="t" style="left:1502.08px;top:35px;font-size:13.8px;line-height:15px;color:#000;font-weight:bold;font-style:normal;transform:scaleX(0.9420);transform-origin:0 0;">Tháng 9</div><div class="t" style="left:1588.47px;top:35px;font-size:13.8px;line-height:15px;color:#000;font-weight:bold;font-style:normal;transform:scaleX(0.9420);transform-origin:0 0;">Tháng 10</div><div class="t" style="left:1678.83px;top:35px;font-size:13.8px;line-height:15px;color:#000;font-weight:bold;font-style:normal;transform:scaleX(0.9420);transform-origin:0 0;">Tháng 11</div><div class="t" style="left:1768.47px;top:35px;font-size:13.8px;line-height:15px;color:#000;font-weight:bold;font-style:normal;transform:scaleX(0.9420);transform-origin:0 0;">Tháng 12</div><div class="t" style="left:1863.97px;top:35px;font-size:13.8px;line-height:15px;color:#000;font-weight:bold;font-style:normal;transform:scaleX(0.9420);transform-origin:0 0;">Tháng 13</div><div class="t" style="left:28.00px;top:52px;font-size:13.8px;line-height:15px;color:#000;font-weight:bold;font-style:normal;transform:scaleX(0.9420);transform-origin:0 0;">PHÂN KỲ ĐẦU TƯ</div><div class="t" style="left:28.00px;top:69px;font-size:13.8px;line-height:15px;color:#000;font-weight:normal;font-style:normal;transform:scaleX(0.9420);transform-origin:0 0;"> Chi phí mặt bằng</div><div class="t" style="left:560.94px;top:69px;font-size:13.8px;line-height:15px;color:#000;font-weight:normal;font-style:normal;transform:scaleX(0.9420);transform-origin:0 0;">60,000,000</div><div class="t" style="left:650.94px;top:69px;font-size:13.8px;line-height:15px;color:#000;font-weight:normal;font-style:normal;transform:scaleX(0.9420);transform-origin:0 0;">60,000,000</div><div class="t" style="left:28.00px;top:86px;font-size:13.8px;line-height:15px;color:#000;font-weight:normal;font-style:normal;transform:scaleX(0.9420);transform-origin:0 0;"> Chi phí Xây dựng &amp; Sửa chữa</div><div class="t" style="left:417.77px;top:86px;font-size:13.8px;line-height:15px;color:#000;font-weight:normal;font-style:normal;transform:scaleX(0.9420);transform-origin:0 0;">2</div><div class="t" style="left:434.00px;top:86px;font-size:13.8px;line-height:15px;color:#000;font-weight:normal;font-style:normal;transform:scaleX(0.9420);transform-origin:0 0;"> tháng</div><div class="t" style="left:560.94px;top:86px;font-size:13.8px;line-height:15px;color:#000;font-weight:normal;font-style:normal;transform:scaleX(0.9420);transform-origin:0 0;">28,800,000</div><div class="t" style="left:748.94px;top:86px;font-size:13.8px;line-height:15px;color:#000;font-weight:normal;font-style:normal;transform:scaleX(0.9420);transform-origin:0 0;">14,400,000</div><div class="t" style="left:846.94px;top:86px;font-size:13.8px;line-height:15px;color:#000;font-weight:normal;font-style:normal;transform:scaleX(0.9420);transform-origin:0 0;">14,400,000</div><div class="t" style="left:991.67px;top:87px;font-size:13.8px;line-height:15px;color:#000;font-weight:normal;font-style:normal;transform:scaleX(0.9420);transform-origin:0 0;">-</div><div class="t" style="left:1089.67px;top:87px;font-size:13.8px;line-height:15px;color:#000;font-weight:normal;font-style:normal;transform:scaleX(0.9420);transform-origin:0 0;">-</div><div class="t" style="left:1187.67px;top:87px;font-size:13.8px;line-height:15px;color:#000;font-weight:normal;font-style:normal;transform:scaleX(0.9420);transform-origin:0 0;">-</div><div class="t" style="left:1277.67px;top:87px;font-size:13.8px;line-height:15px;color:#000;font-weight:normal;font-style:normal;transform:scaleX(0.9420);transform-origin:0 0;">-</div><div class="t" style="left:1367.67px;top:87px;font-size:13.8px;line-height:15px;color:#000;font-weight:normal;font-style:normal;transform:scaleX(0.9420);transform-origin:0 0;">-</div><div class="t" style="left:1457.67px;top:87px;font-size:13.8px;line-height:15px;color:#000;font-weight:normal;font-style:normal;transform:scaleX(0.9420);transform-origin:0 0;">-</div><div class="t" style="left:1547.67px;top:87px;font-size:13.8px;line-height:15px;color:#000;font-weight:normal;font-style:normal;transform:scaleX(0.9420);transform-origin:0 0;">-</div><div class="t" style="left:1637.67px;top:87px;font-size:13.8px;line-height:15px;color:#000;font-weight:normal;font-style:normal;transform:scaleX(0.9420);transform-origin:0 0;">-</div><div class="t" style="left:1727.67px;top:87px;font-size:13.8px;line-height:15px;color:#000;font-weight:normal;font-style:normal;transform:scaleX(0.9420);transform-origin:0 0;">-</div><div class="t" style="left:1817.67px;top:87px;font-size:13.8px;line-height:15px;color:#000;font-weight:normal;font-style:normal;transform:scaleX(0.9420);transform-origin:0 0;">-</div><div class="t" style="left:28.00px;top:103px;font-size:13.8px;line-height:15px;color:#000;font-weight:normal;font-style:normal;transform:scaleX(0.9420);transform-origin:0 0;"> Chi phí Thiết bị, Công cụ dụng cụ</div><div class="t" style="left:417.77px;top:103px;font-size:13.8px;line-height:15px;color:#000;font-weight:normal;font-style:normal;transform:scaleX(0.9420);transform-origin:0 0;">1</div><div class="t" style="left:434.00px;top:103px;font-size:13.8px;line-height:15px;color:#000;font-weight:normal;font-style:normal;transform:scaleX(0.9420);transform-origin:0 0;"> tháng</div><div class="t" style="left:553.71px;top:103px;font-size:13.8px;line-height:15px;color:#000;font-weight:normal;font-style:normal;transform:scaleX(0.9420);transform-origin:0 0;">596,784,300</div><div class="t" style="left:839.71px;top:103px;font-size:13.8px;line-height:15px;color:#000;font-weight:normal;font-style:normal;transform:scaleX(0.9420);transform-origin:0 0;">596,784,300</div><div class="t" style="left:28.00px;top:120px;font-size:13.8px;line-height:15px;color:#000;font-weight:normal;font-style:normal;transform:scaleX(0.9420);transform-origin:0 0;"> Chi phí khác</div><div class="t" style="left:568.17px;top:120px;font-size:13.8px;line-height:15px;color:#000;font-weight:normal;font-style:normal;transform:scaleX(0.9420);transform-origin:0 0;">7,000,000</div><div class="t" style="left:658.17px;top:120px;font-size:13.8px;line-height:15px;color:#000;font-weight:normal;font-style:normal;transform:scaleX(0.9420);transform-origin:0 0;">7,000,000</div><div class="t" style="left:28.00px;top:137px;font-size:13.8px;line-height:15px;color:#000;font-weight:normal;font-style:normal;transform:scaleX(0.9420);transform-origin:0 0;"> Dự phòng phí</div><div class="t" style="left:417.77px;top:137px;font-size:13.8px;line-height:15px;color:#000;font-weight:normal;font-style:normal;transform:scaleX(0.9420);transform-origin:0 0;">2</div><div class="t" style="left:434.00px;top:137px;font-size:13.8px;line-height:15px;color:#000;font-weight:normal;font-style:normal;transform:scaleX(0.9420);transform-origin:0 0;"> tháng</div><div class="t" style="left:560.94px;top:137px;font-size:13.8px;line-height:15px;color:#000;font-weight:normal;font-style:normal;transform:scaleX(0.9420);transform-origin:0 0;">34,629,215</div><div class="t" style="left:748.94px;top:137px;font-size:13.8px;line-height:15px;color:#000;font-weight:normal;font-style:normal;transform:scaleX(0.9420);transform-origin:0 0;">17,314,608</div><div class="t" style="left:846.94px;top:137px;font-size:13.8px;line-height:15px;color:#000;font-weight:normal;font-style:normal;transform:scaleX(0.9420);transform-origin:0 0;">17,314,608</div><div class="t" style="left:991.67px;top:138px;font-size:13.8px;line-height:15px;color:#000;font-weight:normal;font-style:normal;transform:scaleX(0.9420);transform-origin:0 0;">-</div><div class="t" style="left:1089.67px;top:138px;font-size:13.8px;line-height:15px;color:#000;font-weight:normal;font-style:normal;transform:scaleX(0.9420);transform-origin:0 0;">-</div><div class="t" style="left:1187.67px;top:138px;font-size:13.8px;line-height:15px;color:#000;font-weight:normal;font-style:normal;transform:scaleX(0.9420);transform-origin:0 0;">-</div><div class="t" style="left:1277.67px;top:138px;font-size:13.8px;line-height:15px;color:#000;font-weight:normal;font-style:normal;transform:scaleX(0.9420);transform-origin:0 0;">-</div><div class="t" style="left:1367.67px;top:138px;font-size:13.8px;line-height:15px;color:#000;font-weight:normal;font-style:normal;transform:scaleX(0.9420);transform-origin:0 0;">-</div><div class="t" style="left:1457.67px;top:138px;font-size:13.8px;line-height:15px;color:#000;font-weight:normal;font-style:normal;transform:scaleX(0.9420);transform-origin:0 0;">-</div><div class="t" style="left:1547.67px;top:138px;font-size:13.8px;line-height:15px;color:#000;font-weight:normal;font-style:normal;transform:scaleX(0.9420);transform-origin:0 0;">-</div><div class="t" style="left:1637.67px;top:138px;font-size:13.8px;line-height:15px;color:#000;font-weight:normal;font-style:normal;transform:scaleX(0.9420);transform-origin:0 0;">-</div><div class="t" style="left:1727.67px;top:138px;font-size:13.8px;line-height:15px;color:#000;font-weight:normal;font-style:normal;transform:scaleX(0.9420);transform-origin:0 0;">-</div><div class="t" style="left:1817.67px;top:138px;font-size:13.8px;line-height:15px;color:#000;font-weight:normal;font-style:normal;transform:scaleX(0.9420);transform-origin:0 0;">-</div><div class="t" style="left:28.00px;top:154px;font-size:13.8px;line-height:15px;color:#000;font-weight:normal;font-style:normal;transform:scaleX(0.9420);transform-origin:0 0;"> Lãi vay giai đoạn đầu tư</div><div class="t" style="left:417.77px;top:154px;font-size:13.8px;line-height:15px;color:#000;font-weight:normal;font-style:normal;transform:scaleX(0.9420);transform-origin:0 0;">2</div><div class="t" style="left:434.00px;top:154px;font-size:13.8px;line-height:15px;color:#000;font-weight:normal;font-style:normal;transform:scaleX(0.9420);transform-origin:0 0;"> tháng</div><div class="t" style="left:568.17px;top:154px;font-size:13.8px;line-height:15px;color:#000;font-weight:normal;font-style:normal;transform:scaleX(0.9420);transform-origin:0 0;">3,403,712</div><div class="t" style="left:697.67px;top:155px;font-size:13.8px;line-height:15px;color:#000;font-weight:normal;font-style:normal;transform:scaleX(0.9420);transform-origin:0 0;">-</div><div class="t" style="left:767.01px;top:154px;font-size:13.8px;line-height:15px;color:#000;font-weight:normal;font-style:normal;transform:scaleX(0.9420);transform-origin:0 0;">394,858</div><div class="t" style="left:854.17px;top:154px;font-size:13.8px;line-height:15px;color:#000;font-weight:normal;font-style:normal;transform:scaleX(0.9420);transform-origin:0 0;">3,008,854</div><div class="t" style="left:991.67px;top:155px;font-size:13.8px;line-height:15px;color:#000;font-weight:normal;font-style:normal;transform:scaleX(0.9420);transform-origin:0 0;">-</div><div class="t" style="left:1089.67px;top:155px;font-size:13.8px;line-height:15px;color:#000;font-weight:normal;font-style:normal;transform:scaleX(0.9420);transform-origin:0 0;">-</div><div class="t" style="left:1187.67px;top:155px;font-size:13.8px;line-height:15px;color:#000;font-weight:normal;font-style:normal;transform:scaleX(0.9420);transform-origin:0 0;">-</div><div class="t" style="left:1277.67px;top:155px;font-size:13.8px;line-height:15px;color:#000;font-weight:normal;font-style:normal;transform:scaleX(0.9420);transform-origin:0 0;">-</div><div class="t" style="left:1367.67px;top:155px;font-size:13.8px;line-height:15px;color:#000;font-weight:normal;font-style:normal;transform:scaleX(0.9420);transform-origin:0 0;">-</div><div class="t" style="left:1457.67px;top:155px;font-size:13.8px;line-height:15px;color:#000;font-weight:normal;font-style:normal;transform:scaleX(0.9420);transform-origin:0 0;">-</div><div class="t" style="left:1547.67px;top:155px;font-size:13.8px;line-height:15px;color:#000;font-weight:normal;font-style:normal;transform:scaleX(0.9420);transform-origin:0 0;">-</div><div class="t" style="left:1637.67px;top:155px;font-size:13.8px;line-height:15px;color:#000;font-weight:normal;font-style:normal;transform:scaleX(0.9420);transform-origin:0 0;">-</div><div class="t" style="left:1727.67px;top:155px;font-size:13.8px;line-height:15px;color:#000;font-weight:normal;font-style:normal;transform:scaleX(0.9420);transform-origin:0 0;">-</div><div class="t" style="left:1817.67px;top:155px;font-size:13.8px;line-height:15px;color:#000;font-weight:normal;font-style:normal;transform:scaleX(0.9420);transform-origin:0 0;">-</div><div class="t" style="left:28.00px;top:171px;font-size:13.8px;line-height:15px;color:#000;font-weight:normal;font-style:normal;transform:scaleX(0.9420);transform-origin:0 0;"> Chi phí hoạt động ban đầu (Vốn lưu động)</div><div class="t" style="left:417.77px;top:171px;font-size:13.8px;line-height:15px;color:#000;font-weight:normal;font-style:normal;transform:scaleX(0.9420);transform-origin:0 0;">1</div><div class="t" style="left:434.00px;top:171px;font-size:13.8px;line-height:15px;color:#000;font-weight:normal;font-style:normal;transform:scaleX(0.9420);transform-origin:0 0;"> tháng</div><div class="t" style="left:560.94px;top:171px;font-size:13.8px;line-height:15px;color:#000;font-weight:normal;font-style:normal;transform:scaleX(0.9420);transform-origin:0 0;">25,000,000</div><div class="t" style="left:846.94px;top:171px;font-size:13.8px;line-height:15px;color:#000;font-weight:normal;font-style:normal;transform:scaleX(0.9420);transform-origin:0 0;">25,000,000</div><div class="t" style="left:144.29px;top:188px;font-size:13.8px;line-height:15px;color:#000;font-weight:bold;font-style:normal;transform:scaleX(0.9420);transform-origin:0 0;">Tổng cộng</div><div class="t" style="left:553.71px;top:188px;font-size:13.8px;line-height:15px;color:#000;font-weight:bold;font-style:normal;transform:scaleX(0.9420);transform-origin:0 0;">755,617,227</div><div class="t" style="left:650.94px;top:188px;font-size:13.8px;line-height:15px;color:#000;font-weight:bold;font-style:normal;transform:scaleX(0.9420);transform-origin:0 0;">67,000,000</div><div class="t" style="left:748.94px;top:188px;font-size:13.8px;line-height:15px;color:#000;font-weight:bold;font-style:normal;transform:scaleX(0.9420);transform-origin:0 0;">32,109,466</div><div class="t" style="left:839.71px;top:188px;font-size:13.8px;line-height:15px;color:#000;font-weight:bold;font-style:normal;transform:scaleX(0.9420);transform-origin:0 0;">656,507,762</div><div class="t" style="left:991.67px;top:189px;font-size:13.8px;line-height:15px;color:#000;font-weight:normal;font-style:normal;transform:scaleX(0.9420);transform-origin:0 0;">-</div><div class="t" style="left:1089.67px;top:189px;font-size:13.8px;line-height:15px;color:#000;font-weight:normal;font-style:normal;transform:scaleX(0.9420);transform-origin:0 0;">-</div><div class="t" style="left:1187.67px;top:189px;font-size:13.8px;line-height:15px;color:#000;font-weight:normal;font-style:normal;transform:scaleX(0.9420);transform-origin:0 0;">-</div><div class="t" style="left:1277.67px;top:189px;font-size:13.8px;line-height:15px;color:#000;font-weight:normal;font-style:normal;transform:scaleX(0.9420);transform-origin:0 0;">-</div><div class="t" style="left:1367.67px;top:189px;font-size:13.8px;line-height:15px;color:#000;font-weight:normal;font-style:normal;transform:scaleX(0.9420);transform-origin:0 0;">-</div><div class="t" style="left:1457.67px;top:189px;font-size:13.8px;line-height:15px;color:#000;font-weight:normal;font-style:normal;transform:scaleX(0.9420);transform-origin:0 0;">-</div><div class="t" style="left:1547.67px;top:189px;font-size:13.8px;line-height:15px;color:#000;font-weight:normal;font-style:normal;transform:scaleX(0.9420);transform-origin:0 0;">-</div><div class="t" style="left:1637.67px;top:189px;font-size:13.8px;line-height:15px;color:#000;font-weight:normal;font-style:normal;transform:scaleX(0.9420);transform-origin:0 0;">-</div><div class="t" style="left:1727.67px;top:189px;font-size:13.8px;line-height:15px;color:#000;font-weight:normal;font-style:normal;transform:scaleX(0.9420);transform-origin:0 0;">-</div><div class="t" style="left:1817.67px;top:189px;font-size:13.8px;line-height:15px;color:#000;font-weight:normal;font-style:normal;transform:scaleX(0.9420);transform-origin:0 0;">-</div><div class="t" style="left:28.00px;top:222px;font-size:13.8px;line-height:15px;color:#000;font-weight:bold;font-style:normal;transform:scaleX(0.9420);transform-origin:0 0;">VAY VỐN</div><div class="t" style="left:28.00px;top:239px;font-size:13.8px;line-height:15px;color:#000;font-weight:bold;font-style:normal;transform:scaleX(0.9420);transform-origin:0 0;"> Tổng vốn đầu tư (không bao gồm lãi vay)</div><div class="t" style="left:553.71px;top:239px;font-size:13.8px;line-height:15px;color:#000;font-weight:bold;font-style:normal;transform:scaleX(0.9420);transform-origin:0 0;">752,213,515</div><div class="t" style="left:650.94px;top:239px;font-size:13.8px;line-height:15px;color:#000;font-weight:bold;font-style:normal;transform:scaleX(0.9420);transform-origin:0 0;">67,000,000</div><div class="t" style="left:748.94px;top:239px;font-size:13.8px;line-height:15px;color:#000;font-weight:bold;font-style:normal;transform:scaleX(0.9420);transform-origin:0 0;">31,714,608</div><div class="t" style="left:839.71px;top:239px;font-size:13.8px;line-height:15px;color:#000;font-weight:bold;font-style:normal;transform:scaleX(0.9420);transform-origin:0 0;">653,498,908</div><div class="t" style="left:991.67px;top:240px;font-size:13.8px;line-height:15px;color:#000;font-weight:normal;font-style:normal;transform:scaleX(0.9420);transform-origin:0 0;">-</div><div class="t" style="left:1089.67px;top:240px;font-size:13.8px;line-height:15px;color:#000;font-weight:normal;font-style:normal;transform:scaleX(0.9420);transform-origin:0 0;">-</div><div class="t" style="left:1187.67px;top:240px;font-size:13.8px;line-height:15px;color:#000;font-weight:normal;font-style:normal;transform:scaleX(0.9420);transform-origin:0 0;">-</div><div class="t" style="left:1277.67px;top:240px;font-size:13.8px;line-height:15px;color:#000;font-weight:normal;font-style:normal;transform:scaleX(0.9420);transform-origin:0 0;">-</div><div class="t" style="left:1367.67px;top:240px;font-size:13.8px;line-height:15px;color:#000;font-weight:normal;font-style:normal;transform:scaleX(0.9420);transform-origin:0 0;">-</div><div class="t" style="left:1457.67px;top:240px;font-size:13.8px;line-height:15px;color:#000;font-weight:normal;font-style:normal;transform:scaleX(0.9420);transform-origin:0 0;">-</div><div class="t" style="left:1547.67px;top:240px;font-size:13.8px;line-height:15px;color:#000;font-weight:normal;font-style:normal;transform:scaleX(0.9420);transform-origin:0 0;">-</div><div class="t" style="left:1637.67px;top:240px;font-size:13.8px;line-height:15px;color:#000;font-weight:normal;font-style:normal;transform:scaleX(0.9420);transform-origin:0 0;">-</div><div class="t" style="left:1727.67px;top:240px;font-size:13.8px;line-height:15px;color:#000;font-weight:normal;font-style:normal;transform:scaleX(0.9420);transform-origin:0 0;">-</div><div class="t" style="left:1817.67px;top:240px;font-size:13.8px;line-height:15px;color:#000;font-weight:normal;font-style:normal;transform:scaleX(0.9420);transform-origin:0 0;">-</div><div class="t" style="left:28.00px;top:256px;font-size:13.8px;line-height:15px;color:#000;font-weight:normal;font-style:normal;transform:scaleX(0.9420);transform-origin:0 0;"> Vốn chủ sở hữu</div><div class="t" style="left:398.98px;top:256px;font-size:13.8px;line-height:15px;color:#000;font-weight:normal;font-style:normal;transform:scaleX(0.9420);transform-origin:0 0;">60%</div><div class="t" style="left:434.00px;top:256px;font-size:13.8px;line-height:15px;color:#000;font-weight:normal;font-style:normal;transform:scaleX(0.9420);transform-origin:0 0;"> /Tổng vốn</div><div class="t" style="left:553.71px;top:256px;font-size:13.8px;line-height:15px;color:#000;font-weight:normal;font-style:normal;transform:scaleX(0.9420);transform-origin:0 0;">451,328,109</div><div class="t" style="left:650.94px;top:256px;font-size:13.8px;line-height:15px;color:#000;font-weight:normal;font-style:normal;transform:scaleX(0.9420);transform-origin:0 0;">40,200,000</div><div class="t" style="left:748.94px;top:256px;font-size:13.8px;line-height:15px;color:#000;font-weight:normal;font-style:normal;transform:scaleX(0.9420);transform-origin:0 0;">19,028,765</div><div class="t" style="left:839.71px;top:256px;font-size:13.8px;line-height:15px;color:#000;font-weight:normal;font-style:normal;transform:scaleX(0.9420);transform-origin:0 0;">392,099,345</div><div class="t" style="left:991.67px;top:257px;font-size:13.8px;line-height:15px;color:#000;font-weight:normal;font-style:normal;transform:scaleX(0.9420);transform-origin:0 0;">-</div><div class="t" style="left:1089.67px;top:257px;font-size:13.8px;line-height:15px;color:#000;font-weight:normal;font-style:normal;transform:scaleX(0.9420);transform-origin:0 0;">-</div><div class="t" style="left:1187.67px;top:257px;font-size:13.8px;line-height:15px;color:#000;font-weight:normal;font-style:normal;transform:scaleX(0.9420);transform-origin:0 0;">-</div><div class="t" style="left:1277.67px;top:257px;font-size:13.8px;line-height:15px;color:#000;font-weight:normal;font-style:normal;transform:scaleX(0.9420);transform-origin:0 0;">-</div><div class="t" style="left:1367.67px;top:257px;font-size:13.8px;line-height:15px;color:#000;font-weight:normal;font-style:normal;transform:scaleX(0.9420);transform-origin:0 0;">-</div><div class="t" style="left:1457.67px;top:257px;font-size:13.8px;line-height:15px;color:#000;font-weight:normal;font-style:normal;transform:scaleX(0.9420);transform-origin:0 0;">-</div><div class="t" style="left:1547.67px;top:257px;font-size:13.8px;line-height:15px;color:#000;font-weight:normal;font-style:normal;transform:scaleX(0.9420);transform-origin:0 0;">-</div><div class="t" style="left:1637.67px;top:257px;font-size:13.8px;line-height:15px;color:#000;font-weight:normal;font-style:normal;transform:scaleX(0.9420);transform-origin:0 0;">-</div><div class="t" style="left:1727.67px;top:257px;font-size:13.8px;line-height:15px;color:#000;font-weight:normal;font-style:normal;transform:scaleX(0.9420);transform-origin:0 0;">-</div><div class="t" style="left:1817.67px;top:257px;font-size:13.8px;line-height:15px;color:#000;font-weight:normal;font-style:normal;transform:scaleX(0.9420);transform-origin:0 0;">-</div><div class="t" style="left:28.00px;top:273px;font-size:13.8px;line-height:15px;color:#000;font-weight:normal;font-style:normal;transform:scaleX(0.9420);transform-origin:0 0;"> Vốn vay</div><div class="t" style="left:398.98px;top:273px;font-size:13.8px;line-height:15px;color:#000;font-weight:normal;font-style:normal;transform:scaleX(0.9420);transform-origin:0 0;">40%</div><div class="t" style="left:434.00px;top:273px;font-size:13.8px;line-height:15px;color:#000;font-weight:normal;font-style:normal;transform:scaleX(0.9420);transform-origin:0 0;"> /Tổng vốn</div><div class="t" style="left:553.71px;top:273px;font-size:13.8px;line-height:15px;color:#000;font-weight:normal;font-style:normal;transform:scaleX(0.9420);transform-origin:0 0;">300,885,406</div><div class="t" style="left:650.94px;top:273px;font-size:13.8px;line-height:15px;color:#000;font-weight:normal;font-style:normal;transform:scaleX(0.9420);transform-origin:0 0;">26,800,000</div><div class="t" style="left:748.94px;top:273px;font-size:13.8px;line-height:15px;color:#000;font-weight:normal;font-style:normal;transform:scaleX(0.9420);transform-origin:0 0;">12,685,843</div><div class="t" style="left:839.71px;top:273px;font-size:13.8px;line-height:15px;color:#000;font-weight:normal;font-style:normal;transform:scaleX(0.9420);transform-origin:0 0;">261,399,563</div><div class="t" style="left:991.67px;top:274px;font-size:13.8px;line-height:15px;color:#000;font-weight:normal;font-style:normal;transform:scaleX(0.9420);transform-origin:0 0;">-</div><div class="t" style="left:1089.67px;top:274px;font-size:13.8px;line-height:15px;color:#000;font-weight:normal;font-style:normal;transform:scaleX(0.9420);transform-origin:0 0;">-</div><div class="t" style="left:1187.67px;top:274px;font-size:13.8px;line-height:15px;color:#000;font-weight:normal;font-style:normal;transform:scaleX(0.9420);transform-origin:0 0;">-</div><div class="t" style="left:1277.67px;top:274px;font-size:13.8px;line-height:15px;color:#000;font-weight:normal;font-style:normal;transform:scaleX(0.9420);transform-origin:0 0;">-</div><div class="t" style="left:1367.67px;top:274px;font-size:13.8px;line-height:15px;color:#000;font-weight:normal;font-style:normal;transform:scaleX(0.9420);transform-origin:0 0;">-</div><div class="t" style="left:1457.67px;top:274px;font-size:13.8px;line-height:15px;color:#000;font-weight:normal;font-style:normal;transform:scaleX(0.9420);transform-origin:0 0;">-</div><div class="t" style="left:1547.67px;top:274px;font-size:13.8px;line-height:15px;color:#000;font-weight:normal;font-style:normal;transform:scaleX(0.9420);transform-origin:0 0;">-</div><div class="t" style="left:1637.67px;top:274px;font-size:13.8px;line-height:15px;color:#000;font-weight:normal;font-style:normal;transform:scaleX(0.9420);transform-origin:0 0;">-</div><div class="t" style="left:1727.67px;top:274px;font-size:13.8px;line-height:15px;color:#000;font-weight:normal;font-style:normal;transform:scaleX(0.9420);transform-origin:0 0;">-</div><div class="t" style="left:1817.67px;top:274px;font-size:13.8px;line-height:15px;color:#000;font-weight:normal;font-style:normal;transform:scaleX(0.9420);transform-origin:0 0;">-</div><div class="t" style="left:28.00px;top:290px;font-size:13.8px;line-height:15px;color:#000;font-weight:normal;font-style:normal;transform:scaleX(0.9420);transform-origin:0 0;">Thời hạn vay</div><div class="t" style="left:410.54px;top:290px;font-size:13.8px;line-height:15px;color:#000;font-weight:normal;font-style:normal;transform:scaleX(0.9420);transform-origin:0 0;">60</div><div class="t" style="left:434.00px;top:290px;font-size:13.8px;line-height:15px;color:#000;font-weight:normal;font-style:normal;transform:scaleX(0.9420);transform-origin:0 0;">tháng</div><div class="t" style="left:28.00px;top:307px;font-size:13.8px;line-height:15px;color:#000;font-weight:normal;font-style:normal;transform:scaleX(0.9420);transform-origin:0 0;">Lãi suất vay</div><div class="t" style="left:398.98px;top:307px;font-size:13.8px;line-height:15px;color:#000;font-weight:normal;font-style:normal;transform:scaleX(0.9420);transform-origin:0 0;">12%</div><div class="t" style="left:434.00px;top:307px;font-size:13.8px;line-height:15px;color:#000;font-weight:normal;font-style:normal;transform:scaleX(0.9420);transform-origin:0 0;">/năm</div><div class="t" style="left:28.00px;top:324px;font-size:13.8px;line-height:15px;color:#000;font-weight:normal;font-style:normal;transform:scaleX(0.9420);transform-origin:0 0;">Thời gian ân hạn gốc</div><div class="t" style="left:417.77px;top:324px;font-size:13.8px;line-height:15px;color:#000;font-weight:normal;font-style:normal;transform:scaleX(0.9420);transform-origin:0 0;">2</div><div class="t" style="left:434.00px;top:324px;font-size:13.8px;line-height:15px;color:#000;font-weight:normal;font-style:normal;transform:scaleX(0.9420);transform-origin:0 0;">tháng</div><div class="t" style="left:28.00px;top:341px;font-size:13.8px;line-height:15px;color:#000;font-weight:bold;font-style:normal;transform:scaleX(0.9420);transform-origin:0 0;"> Trả nợ</div><div class="t" style="left:553.71px;top:341px;font-size:13.8px;line-height:15px;color:#000;font-weight:bold;font-style:normal;transform:scaleX(0.9420);transform-origin:0 0;">393,050,313</div><div class="t" style="left:697.67px;top:342px;font-size:13.8px;line-height:15px;color:#000;font-weight:normal;font-style:normal;transform:scaleX(0.9420);transform-origin:0 0;">-</div><div class="t" style="left:767.01px;top:341px;font-size:13.8px;line-height:15px;color:#000;font-weight:bold;font-style:normal;transform:scaleX(0.9420);transform-origin:0 0;">394,858</div><div class="t" style="left:854.17px;top:341px;font-size:13.8px;line-height:15px;color:#000;font-weight:bold;font-style:normal;transform:scaleX(0.9420);transform-origin:0 0;">3,008,854</div><div class="t" style="left:952.17px;top:341px;font-size:13.8px;line-height:15px;color:#000;font-weight:bold;font-style:normal;transform:scaleX(0.9420);transform-origin:0 0;">8,196,533</div><div class="t" style="left:1050.17px;top:341px;font-size:13.8px;line-height:15px;color:#000;font-weight:bold;font-style:normal;transform:scaleX(0.9420);transform-origin:0 0;">8,144,657</div><div class="t" style="left:1148.17px;top:341px;font-size:13.8px;line-height:15px;color:#000;font-weight:bold;font-style:normal;transform:scaleX(0.9420);transform-origin:0 0;">8,092,780</div><div class="t" style="left:1238.17px;top:341px;font-size:13.8px;line-height:15px;color:#000;font-weight:bold;font-style:normal;transform:scaleX(0.9420);transform-origin:0 0;">8,040,903</div><div class="t" style="left:1328.17px;top:341px;font-size:13.8px;line-height:15px;color:#000;font-weight:bold;font-style:normal;transform:scaleX(0.9420);transform-origin:0 0;">7,989,026</div><div class="t" style="left:1418.17px;top:341px;font-size:13.8px;line-height:15px;color:#000;font-weight:bold;font-style:normal;transform:scaleX(0.9420);transform-origin:0 0;">7,937,150</div><div class="t" style="left:1508.17px;top:341px;font-size:13.8px;line-height:15px;color:#000;font-weight:bold;font-style:normal;transform:scaleX(0.9420);transform-origin:0 0;">7,885,273</div><div class="t" style="left:1598.17px;top:341px;font-size:13.8px;line-height:15px;color:#000;font-weight:bold;font-style:normal;transform:scaleX(0.9420);transform-origin:0 0;">7,833,396</div><div class="t" style="left:1688.17px;top:341px;font-size:13.8px;line-height:15px;color:#000;font-weight:bold;font-style:normal;transform:scaleX(0.9420);transform-origin:0 0;">7,781,519</div><div class="t" style="left:1778.17px;top:341px;font-size:13.8px;line-height:15px;color:#000;font-weight:bold;font-style:normal;transform:scaleX(0.9420);transform-origin:0 0;">7,729,642</div><div class="t" style="left:1879.17px;top:341px;font-size:13.8px;line-height:15px;color:#000;font-weight:bold;font-style:normal;transform:scaleX(0.9420);transform-origin:0 0;">7,677,765</div><div class="t" style="left:28.00px;top:358px;font-size:13.8px;line-height:15px;color:#000;font-weight:normal;font-style:italic;transform:scaleX(0.9420);transform-origin:0 0;">      Gốc</div><div class="t" style="left:553.71px;top:358px;font-size:13.8px;line-height:15px;color:#000;font-weight:normal;font-style:normal;transform:scaleX(0.9420);transform-origin:0 0;">300,885,406</div><div class="t" style="left:952.17px;top:358px;font-size:13.8px;line-height:15px;color:#000;font-weight:normal;font-style:italic;transform:scaleX(0.9420);transform-origin:0 0;">5,187,679</div><div class="t" style="left:1050.17px;top:358px;font-size:13.8px;line-height:15px;color:#000;font-weight:normal;font-style:italic;transform:scaleX(0.9420);transform-origin:0 0;">5,187,679</div><div class="t" style="left:1148.17px;top:358px;font-size:13.8px;line-height:15px;color:#000;font-weight:normal;font-style:italic;transform:scaleX(0.9420);transform-origin:0 0;">5,187,679</div><div class="t" style="left:1238.17px;top:358px;font-size:13.8px;line-height:15px;color:#000;font-weight:normal;font-style:italic;transform:scaleX(0.9420);transform-origin:0 0;">5,187,679</div><div class="t" style="left:1328.17px;top:358px;font-size:13.8px;line-height:15px;color:#000;font-weight:normal;font-style:italic;transform:scaleX(0.9420);transform-origin:0 0;">5,187,679</div><div class="t" style="left:1418.17px;top:358px;font-size:13.8px;line-height:15px;color:#000;font-weight:normal;font-style:italic;transform:scaleX(0.9420);transform-origin:0 0;">5,187,679</div><div class="t" style="left:1508.17px;top:358px;font-size:13.8px;line-height:15px;color:#000;font-weight:normal;font-style:italic;transform:scaleX(0.9420);transform-origin:0 0;">5,187,679</div><div class="t" style="left:1598.17px;top:358px;font-size:13.8px;line-height:15px;color:#000;font-weight:normal;font-style:italic;transform:scaleX(0.9420);transform-origin:0 0;">5,187,679</div><div class="t" style="left:1688.17px;top:358px;font-size:13.8px;line-height:15px;color:#000;font-weight:normal;font-style:italic;transform:scaleX(0.9420);transform-origin:0 0;">5,187,679</div><div class="t" style="left:1778.17px;top:358px;font-size:13.8px;line-height:15px;color:#000;font-weight:normal;font-style:italic;transform:scaleX(0.9420);transform-origin:0 0;">5,187,679</div><div class="t" style="left:1879.17px;top:358px;font-size:13.8px;line-height:15px;color:#000;font-weight:normal;font-style:italic;transform:scaleX(0.9420);transform-origin:0 0;">5,187,679</div><div class="t" style="left:28.00px;top:375px;font-size:13.8px;line-height:15px;color:#000;font-weight:normal;font-style:italic;transform:scaleX(0.9420);transform-origin:0 0;">      Lãi</div><div class="t" style="left:560.94px;top:375px;font-size:13.8px;line-height:15px;color:#000;font-weight:normal;font-style:normal;transform:scaleX(0.9420);transform-origin:0 0;">92,164,907</div><div class="t" style="left:767.01px;top:375px;font-size:13.8px;line-height:15px;color:#000;font-weight:normal;font-style:italic;transform:scaleX(0.9420);transform-origin:0 0;">394,858</div><div class="t" style="left:854.17px;top:375px;font-size:13.8px;line-height:15px;color:#000;font-weight:normal;font-style:italic;transform:scaleX(0.9420);transform-origin:0 0;">3,008,854</div><div class="t" style="left:952.17px;top:375px;font-size:13.8px;line-height:15px;color:#000;font-weight:normal;font-style:italic;transform:scaleX(0.9420);transform-origin:0 0;">3,008,854</div><div class="t" style="left:1050.17px;top:375px;font-size:13.8px;line-height:15px;color:#000;font-weight:normal;font-style:italic;transform:scaleX(0.9420);transform-origin:0 0;">2,956,977</div><div class="t" style="left:1148.17px;top:375px;font-size:13.8px;line-height:15px;color:#000;font-weight:normal;font-style:italic;transform:scaleX(0.9420);transform-origin:0 0;">2,905,100</div><div class="t" style="left:1238.17px;top:375px;font-size:13.8px;line-height:15px;color:#000;font-weight:normal;font-style:italic;transform:scaleX(0.9420);transform-origin:0 0;">2,853,224</div><div class="t" style="left:1328.17px;top:375px;font-size:13.8px;line-height:15px;color:#000;font-weight:normal;font-style:italic;transform:scaleX(0.9420);transform-origin:0 0;">2,801,347</div><div class="t" style="left:1418.17px;top:375px;font-size:13.8px;line-height:15px;color:#000;font-weight:normal;font-style:italic;transform:scaleX(0.9420);transform-origin:0 0;">2,749,470</div><div class="t" style="left:1508.17px;top:375px;font-size:13.8px;line-height:15px;color:#000;font-weight:normal;font-style:italic;transform:scaleX(0.9420);transform-origin:0 0;">2,697,593</div><div class="t" style="left:1598.17px;top:375px;font-size:13.8px;line-height:15px;color:#000;font-weight:normal;font-style:italic;transform:scaleX(0.9420);transform-origin:0 0;">2,645,717</div><div class="t" style="left:1688.17px;top:375px;font-size:13.8px;line-height:15px;color:#000;font-weight:normal;font-style:italic;transform:scaleX(0.9420);transform-origin:0 0;">2,593,840</div><div class="t" style="left:1778.17px;top:375px;font-size:13.8px;line-height:15px;color:#000;font-weight:normal;font-style:italic;transform:scaleX(0.9420);transform-origin:0 0;">2,541,963</div><div class="t" style="left:1879.17px;top:375px;font-size:13.8px;line-height:15px;color:#000;font-weight:normal;font-style:italic;transform:scaleX(0.9420);transform-origin:0 0;">1,490,086</div><div class="t" style="left:28.00px;top:392px;font-size:13.8px;line-height:15px;color:#000;font-weight:normal;font-style:normal;transform:scaleX(0.9420);transform-origin:0 0;">Dư nợ cuối kỳ</div><div class="t" style="left:650.94px;top:392px;font-size:13.8px;line-height:15px;color:#000;font-weight:normal;font-style:normal;transform:scaleX(0.9420);transform-origin:0 0;">26,800,000</div><div class="t" style="left:748.94px;top:392px;font-size:13.8px;line-height:15px;color:#000;font-weight:normal;font-style:normal;transform:scaleX(0.9420);transform-origin:0 0;">39,485,843</div><div class="t" style="left:839.71px;top:392px;font-size:13.8px;line-height:15px;color:#000;font-weight:normal;font-style:normal;transform:scaleX(0.9420);transform-origin:0 0;">300,885,406</div><div class="t" style="left:937.71px;top:392px;font-size:13.8px;line-height:15px;color:#000;font-weight:normal;font-style:normal;transform:scaleX(0.9420);transform-origin:0 0;">295,697,727</div><div class="t" style="left:1035.71px;top:392px;font-size:13.8px;line-height:15px;color:#000;font-weight:normal;font-style:normal;transform:scaleX(0.9420);transform-origin:0 0;">290,510,047</div><div class="t" style="left:1133.71px;top:392px;font-size:13.8px;line-height:15px;color:#000;font-weight:normal;font-style:normal;transform:scaleX(0.9420);transform-origin:0 0;">285,322,368</div><div class="t" style="left:1223.71px;top:392px;font-size:13.8px;line-height:15px;color:#000;font-weight:normal;font-style:normal;transform:scaleX(0.9420);transform-origin:0 0;">280,134,688</div><div class="t" style="left:1313.71px;top:392px;font-size:13.8px;line-height:15px;color:#000;font-weight:normal;font-style:normal;transform:scaleX(0.9420);transform-origin:0 0;">274,947,009</div><div class="t" style="left:1403.71px;top:392px;font-size:13.8px;line-height:15px;color:#000;font-weight:normal;font-style:normal;transform:scaleX(0.9420);transform-origin:0 0;">269,759,330</div><div class="t" style="left:1493.71px;top:392px;font-size:13.8px;line-height:15px;color:#000;font-weight:normal;font-style:normal;transform:scaleX(0.9420);transform-origin:0 0;">264,571,650</div><div class="t" style="left:1583.71px;top:392px;font-size:13.8px;line-height:15px;color:#000;font-weight:normal;font-style:normal;transform:scaleX(0.9420);transform-origin:0 0;">259,383,971</div><div class="t" style="left:1673.71px;top:392px;font-size:13.8px;line-height:15px;color:#000;font-weight:normal;font-style:normal;transform:scaleX(0.9420);transform-origin:0 0;">254,196,291</div><div class="t" style="left:1763.71px;top:392px;font-size:13.8px;line-height:15px;color:#000;font-weight:normal;font-style:normal;transform:scaleX(0.9420);transform-origin:0 0;">249,008,612</div><div class="t" style="left:1864.71px;top:392px;font-size:13.8px;line-height:15px;color:#000;font-weight:normal;font-style:normal;transform:scaleX(0.9420);transform-origin:0 0;">186,627,454</div><div class="t" style="left:28.00px;top:409px;font-size:13.8px;line-height:15px;color:#000;font-weight:normal;font-style:normal;transform:scaleX(0.9420);transform-origin:0 0;">Hệ số khả năng trả nợ (DSCR)</div><div class="t" style="left:697.67px;top:410px;font-size:13.8px;line-height:15px;color:#000;font-weight:normal;font-style:normal;transform:scaleX(0.9420);transform-origin:0 0;">-</div><div class="t" style="left:795.67px;top:410px;font-size:13.8px;line-height:15px;color:#000;font-weight:normal;font-style:normal;transform:scaleX(0.9420);transform-origin:0 0;">-</div><div class="t" style="left:893.67px;top:410px;font-size:13.8px;line-height:15px;color:#000;font-weight:normal;font-style:normal;transform:scaleX(0.9420);transform-origin:0 0;">-</div><div class="t" style="left:987.27px;top:409px;font-size:13.8px;line-height:15px;color:#000;font-weight:normal;font-style:normal;transform:scaleX(0.9420);transform-origin:0 0;">(2.8)</div><div class="t" style="left:1085.27px;top:409px;font-size:13.8px;line-height:15px;color:#000;font-weight:normal;font-style:normal;transform:scaleX(0.9420);transform-origin:0 0;">(1.1)</div><div class="t" style="left:1187.93px;top:409px;font-size:13.8px;line-height:15px;color:#000;font-weight:normal;font-style:normal;transform:scaleX(0.9420);transform-origin:0 0;">0.7</div><div class="t" style="left:1277.93px;top:409px;font-size:13.8px;line-height:15px;color:#000;font-weight:normal;font-style:normal;transform:scaleX(0.9420);transform-origin:0 0;">1.9</div><div class="t" style="left:1367.93px;top:409px;font-size:13.8px;line-height:15px;color:#000;font-weight:normal;font-style:normal;transform:scaleX(0.9420);transform-origin:0 0;">3.7</div><div class="t" style="left:1457.93px;top:409px;font-size:13.8px;line-height:15px;color:#000;font-weight:normal;font-style:normal;transform:scaleX(0.9420);transform-origin:0 0;">5.5</div><div class="t" style="left:1547.93px;top:409px;font-size:13.8px;line-height:15px;color:#000;font-weight:normal;font-style:normal;transform:scaleX(0.9420);transform-origin:0 0;">5.6</div><div class="t" style="left:1637.93px;top:409px;font-size:13.8px;line-height:15px;color:#000;font-weight:normal;font-style:normal;transform:scaleX(0.9420);transform-origin:0 0;">5.6</div><div class="t" style="left:1727.93px;top:409px;font-size:13.8px;line-height:15px;color:#000;font-weight:normal;font-style:normal;transform:scaleX(0.9420);transform-origin:0 0;">5.6</div><div class="t" style="left:1817.93px;top:409px;font-size:13.8px;line-height:15px;color:#000;font-weight:normal;font-style:normal;transform:scaleX(0.9420);transform-origin:0 0;">5.7</div><div class="t" style="left:28.00px;top:426px;font-size:13.8px;line-height:15px;color:#000;font-weight:normal;font-style:normal;transform:scaleX(0.9420);transform-origin:0 0;">Khả năng trả nợ (Có/Không)</div><div class="t" style="left:697.67px;top:427px;font-size:13.8px;line-height:15px;color:#000;font-weight:normal;font-style:normal;transform:scaleX(0.9420);transform-origin:0 0;">-</div><div class="t" style="left:795.67px;top:427px;font-size:13.8px;line-height:15px;color:#000;font-weight:normal;font-style:normal;transform:scaleX(0.9420);transform-origin:0 0;">-</div><div class="t" style="left:893.67px;top:427px;font-size:13.8px;line-height:15px;color:#000;font-weight:normal;font-style:normal;transform:scaleX(0.9420);transform-origin:0 0;">-</div><div class="t" style="left:948.20px;top:426px;font-size:13.8px;line-height:15px;color:#9c0006;font-weight:normal;font-style:normal;transform:scaleX(0.9420);transform-origin:0 0;">Không</div><div class="t" style="left:1046.20px;top:426px;font-size:13.8px;line-height:15px;color:#9c0006;font-weight:normal;font-style:normal;transform:scaleX(0.9420);transform-origin:0 0;">Không</div><div class="t" style="left:1144.20px;top:426px;font-size:13.8px;line-height:15px;color:#9c0006;font-weight:normal;font-style:normal;transform:scaleX(0.9420);transform-origin:0 0;">Không</div><div class="t" style="left:1248.69px;top:426px;font-size:13.8px;line-height:15px;color:#000;font-weight:normal;font-style:normal;transform:scaleX(0.9420);transform-origin:0 0;">Có</div><div class="t" style="left:1338.69px;top:426px;font-size:13.8px;line-height:15px;color:#000;font-weight:normal;font-style:normal;transform:scaleX(0.9420);transform-origin:0 0;">Có</div><div class="t" style="left:1428.69px;top:426px;font-size:13.8px;line-height:15px;color:#000;font-weight:normal;font-style:normal;transform:scaleX(0.9420);transform-origin:0 0;">Có</div><div class="t" style="left:1518.69px;top:426px;font-size:13.8px;line-height:15px;color:#000;font-weight:normal;font-style:normal;transform:scaleX(0.9420);transform-origin:0 0;">Có</div><div class="t" style="left:1608.69px;top:426px;font-size:13.8px;line-height:15px;color:#000;font-weight:normal;font-style:normal;transform:scaleX(0.9420);transform-origin:0 0;">Có</div><div class="t" style="left:1698.69px;top:426px;font-size:13.8px;line-height:15px;color:#000;font-weight:normal;font-style:normal;transform:scaleX(0.9420);transform-origin:0 0;">Có</div><div class="t" style="left:1788.69px;top:426px;font-size:13.8px;line-height:15px;color:#000;font-weight:normal;font-style:normal;transform:scaleX(0.9420);transform-origin:0 0;">Có</div><div class="t" style="left:1884.19px;top:426px;font-size:13.8px;line-height:15px;color:#000;font-weight:normal;font-style:normal;transform:scaleX(0.9420);transform-origin:0 0;">Có</div><div class="t" style="left:28.00px;top:460px;font-size:13.8px;line-height:15px;color:#000;font-weight:bold;font-style:normal;transform:scaleX(0.9420);transform-origin:0 0;">KẾT QUẢ KINH DOANH</div><div class="t" style="left:28.00px;top:477px;font-size:13.8px;line-height:15px;color:#000;font-weight:bold;font-style:normal;transform:scaleX(0.9420);transform-origin:0 0;">Doanh thu</div><div class="t" style="left:542.86px;top:477px;font-size:13.8px;line-height:15px;color:#000;font-weight:bold;font-style:normal;transform:scaleX(0.9420);transform-origin:0 0;">6,862,384,202</div><div class="t" style="left:944.94px;top:477px;font-size:13.8px;line-height:15px;color:#000;font-weight:bold;font-style:normal;transform:scaleX(0.9420);transform-origin:0 0;">33,094,286</div><div class="t" style="left:1042.94px;top:477px;font-size:13.8px;line-height:15px;color:#000;font-weight:bold;font-style:normal;transform:scaleX(0.9420);transform-origin:0 0;">49,641,429</div><div class="t" style="left:1140.94px;top:477px;font-size:13.8px;line-height:15px;color:#000;font-weight:bold;font-style:normal;transform:scaleX(0.9420);transform-origin:0 0;">66,188,571</div><div class="t" style="left:1230.94px;top:477px;font-size:13.8px;line-height:15px;color:#000;font-weight:bold;font-style:normal;transform:scaleX(0.9420);transform-origin:0 0;">77,220,000</div><div class="t" style="left:1320.94px;top:477px;font-size:13.8px;line-height:15px;color:#000;font-weight:bold;font-style:normal;transform:scaleX(0.9420);transform-origin:0 0;">93,767,143</div><div class="t" style="left:1404.42px;top:477px;font-size:13.8px;line-height:15px;color:#000;font-weight:bold;font-style:normal;transform:scaleX(0.9420);transform-origin:0 0;">110,314,286</div><div class="t" style="left:1494.42px;top:477px;font-size:13.8px;line-height:15px;color:#000;font-weight:bold;font-style:normal;transform:scaleX(0.9420);transform-origin:0 0;">110,314,286</div><div class="t" style="left:1584.42px;top:477px;font-size:13.8px;line-height:15px;color:#000;font-weight:bold;font-style:normal;transform:scaleX(0.9420);transform-origin:0 0;">110,314,286</div><div class="t" style="left:1674.42px;top:477px;font-size:13.8px;line-height:15px;color:#000;font-weight:bold;font-style:normal;transform:scaleX(0.9420);transform-origin:0 0;">110,314,286</div><div class="t" style="left:1764.42px;top:477px;font-size:13.8px;line-height:15px;color:#000;font-weight:bold;font-style:normal;transform:scaleX(0.9420);transform-origin:0 0;">110,314,286</div><div class="t" style="left:1865.42px;top:477px;font-size:13.8px;line-height:15px;color:#000;font-weight:bold;font-style:normal;transform:scaleX(0.9420);transform-origin:0 0;">115,828,286</div><div class="t" style="left:28.00px;top:494px;font-size:13.8px;line-height:15px;color:#000;font-weight:normal;font-style:normal;transform:scaleX(0.9420);transform-origin:0 0;">Số giờ chơi chơi bình quân/máy</div><div class="t" style="left:417.77px;top:494px;font-size:13.8px;line-height:15px;color:#000;font-weight:normal;font-style:normal;transform:scaleX(0.9420);transform-origin:0 0;">8</div><div class="t" style="left:434.00px;top:494px;font-size:13.8px;line-height:15px;color:#000;font-weight:normal;font-style:normal;transform:scaleX(0.9420);transform-origin:0 0;">giờ chơi</div><div class="t" style="left:1002.77px;top:494px;font-size:13.8px;line-height:15px;color:#000;font-weight:normal;font-style:normal;transform:scaleX(0.9420);transform-origin:0 0;">2</div><div class="t" style="left:1100.77px;top:494px;font-size:13.8px;line-height:15px;color:#000;font-weight:normal;font-style:normal;transform:scaleX(0.9420);transform-origin:0 0;">4</div><div class="t" style="left:1198.77px;top:494px;font-size:13.8px;line-height:15px;color:#000;font-weight:normal;font-style:normal;transform:scaleX(0.9420);transform-origin:0 0;">5</div><div class="t" style="left:1288.77px;top:494px;font-size:13.8px;line-height:15px;color:#000;font-weight:normal;font-style:normal;transform:scaleX(0.9420);transform-origin:0 0;">6</div><div class="t" style="left:1378.77px;top:494px;font-size:13.8px;line-height:15px;color:#000;font-weight:normal;font-style:normal;transform:scaleX(0.9420);transform-origin:0 0;">7</div><div class="t" style="left:1468.77px;top:494px;font-size:13.8px;line-height:15px;color:#000;font-weight:normal;font-style:normal;transform:scaleX(0.9420);transform-origin:0 0;">8</div><div class="t" style="left:1558.77px;top:494px;font-size:13.8px;line-height:15px;color:#000;font-weight:normal;font-style:normal;transform:scaleX(0.9420);transform-origin:0 0;">8</div><div class="t" style="left:1648.77px;top:494px;font-size:13.8px;line-height:15px;color:#000;font-weight:normal;font-style:normal;transform:scaleX(0.9420);transform-origin:0 0;">8</div><div class="t" style="left:1738.77px;top:494px;font-size:13.8px;line-height:15px;color:#000;font-weight:normal;font-style:normal;transform:scaleX(0.9420);transform-origin:0 0;">8</div><div class="t" style="left:1828.77px;top:494px;font-size:13.8px;line-height:15px;color:#000;font-weight:normal;font-style:normal;transform:scaleX(0.9420);transform-origin:0 0;">8</div><div class="t" style="left:28.00px;top:511px;font-size:13.8px;line-height:15px;color:#000;font-weight:normal;font-style:italic;transform:scaleX(0.9420);transform-origin:0 0;">      Công suất</div><div class="t" style="left:985.48px;top:511px;font-size:13.8px;line-height:15px;color:#9c0006;font-weight:normal;font-style:italic;transform:scaleX(0.9420);transform-origin:0 0;">30%</div><div class="t" style="left:1083.48px;top:511px;font-size:13.8px;line-height:15px;color:#9c0006;font-weight:normal;font-style:italic;transform:scaleX(0.9420);transform-origin:0 0;">45%</div><div class="t" style="left:1181.48px;top:511px;font-size:13.8px;line-height:15px;color:#9c0006;font-weight:normal;font-style:italic;transform:scaleX(0.9420);transform-origin:0 0;">60%</div><div class="t" style="left:1271.48px;top:511px;font-size:13.8px;line-height:15px;color:#9c0006;font-weight:normal;font-style:italic;transform:scaleX(0.9420);transform-origin:0 0;">70%</div><div class="t" style="left:1361.48px;top:511px;font-size:13.8px;line-height:15px;color:#9c0006;font-weight:normal;font-style:italic;transform:scaleX(0.9420);transform-origin:0 0;">85%</div><div class="t" style="left:1444.25px;top:511px;font-size:13.8px;line-height:15px;color:#000;font-weight:normal;font-style:italic;transform:scaleX(0.9420);transform-origin:0 0;">100%</div><div class="t" style="left:1534.25px;top:511px;font-size:13.8px;line-height:15px;color:#000;font-weight:normal;font-style:italic;transform:scaleX(0.9420);transform-origin:0 0;">100%</div><div class="t" style="left:1624.25px;top:511px;font-size:13.8px;line-height:15px;color:#000;font-weight:normal;font-style:italic;transform:scaleX(0.9420);transform-origin:0 0;">100%</div><div class="t" style="left:1714.25px;top:511px;font-size:13.8px;line-height:15px;color:#000;font-weight:normal;font-style:italic;transform:scaleX(0.9420);transform-origin:0 0;">100%</div><div class="t" style="left:1804.25px;top:511px;font-size:13.8px;line-height:15px;color:#000;font-weight:normal;font-style:italic;transform:scaleX(0.9420);transform-origin:0 0;">100%</div><div class="t" style="left:28.00px;top:528px;font-size:13.8px;line-height:15px;color:#000;font-weight:normal;font-style:normal;transform:scaleX(0.9420);transform-origin:0 0;">Doanh thu bình quân/giờ chơi</div><div class="t" style="left:385.24px;top:528px;font-size:13.8px;line-height:15px;color:#000;font-weight:normal;font-style:normal;transform:scaleX(0.9420);transform-origin:0 0;">15,600</div><div class="t" style="left:434.00px;top:528px;font-size:13.8px;line-height:15px;color:#000;font-weight:normal;font-style:normal;transform:scaleX(0.9420);transform-origin:0 0;">đ</div><div class="t" style="left:970.24px;top:528px;font-size:13.8px;line-height:15px;color:#000;font-weight:normal;font-style:normal;transform:scaleX(0.9420);transform-origin:0 0;">15,600</div><div class="t" style="left:1068.24px;top:528px;font-size:13.8px;line-height:15px;color:#000;font-weight:normal;font-style:normal;transform:scaleX(0.9420);transform-origin:0 0;">15,600</div><div class="t" style="left:1166.24px;top:528px;font-size:13.8px;line-height:15px;color:#000;font-weight:normal;font-style:normal;transform:scaleX(0.9420);transform-origin:0 0;">15,600</div><div class="t" style="left:1256.24px;top:528px;font-size:13.8px;line-height:15px;color:#000;font-weight:normal;font-style:normal;transform:scaleX(0.9420);transform-origin:0 0;">15,600</div><div class="t" style="left:1346.24px;top:528px;font-size:13.8px;line-height:15px;color:#000;font-weight:normal;font-style:normal;transform:scaleX(0.9420);transform-origin:0 0;">15,600</div><div class="t" style="left:1436.24px;top:528px;font-size:13.8px;line-height:15px;color:#000;font-weight:normal;font-style:normal;transform:scaleX(0.9420);transform-origin:0 0;">15,600</div><div class="t" style="left:1526.24px;top:528px;font-size:13.8px;line-height:15px;color:#000;font-weight:normal;font-style:normal;transform:scaleX(0.9420);transform-origin:0 0;">15,600</div><div class="t" style="left:1616.24px;top:528px;font-size:13.8px;line-height:15px;color:#000;font-weight:normal;font-style:normal;transform:scaleX(0.9420);transform-origin:0 0;">15,600</div><div class="t" style="left:1706.24px;top:528px;font-size:13.8px;line-height:15px;color:#000;font-weight:normal;font-style:normal;transform:scaleX(0.9420);transform-origin:0 0;">15,600</div><div class="t" style="left:1796.24px;top:528px;font-size:13.8px;line-height:15px;color:#000;font-weight:normal;font-style:normal;transform:scaleX(0.9420);transform-origin:0 0;">15,600</div><div class="t" style="left:28.00px;top:545px;font-size:13.8px;line-height:15px;color:#000;font-weight:normal;font-style:normal;transform:scaleX(0.9420);transform-origin:0 0;">Thời gian</div><div class="t" style="left:410.54px;top:545px;font-size:13.8px;line-height:15px;color:#000;font-weight:normal;font-style:normal;transform:scaleX(0.9420);transform-origin:0 0;">30</div><div class="t" style="left:434.00px;top:545px;font-size:13.8px;line-height:15px;color:#000;font-weight:normal;font-style:normal;transform:scaleX(0.9420);transform-origin:0 0;">ngày</div><div class="t" style="left:995.54px;top:545px;font-size:13.8px;line-height:15px;color:#000;font-weight:normal;font-style:normal;transform:scaleX(0.9420);transform-origin:0 0;">30</div><div class="t" style="left:1093.54px;top:545px;font-size:13.8px;line-height:15px;color:#000;font-weight:normal;font-style:normal;transform:scaleX(0.9420);transform-origin:0 0;">30</div><div class="t" style="left:1191.54px;top:545px;font-size:13.8px;line-height:15px;color:#000;font-weight:normal;font-style:normal;transform:scaleX(0.9420);transform-origin:0 0;">30</div><div class="t" style="left:1281.54px;top:545px;font-size:13.8px;line-height:15px;color:#000;font-weight:normal;font-style:normal;transform:scaleX(0.9420);transform-origin:0 0;">30</div><div class="t" style="left:1371.54px;top:545px;font-size:13.8px;line-height:15px;color:#000;font-weight:normal;font-style:normal;transform:scaleX(0.9420);transform-origin:0 0;">30</div><div class="t" style="left:1461.54px;top:545px;font-size:13.8px;line-height:15px;color:#000;font-weight:normal;font-style:normal;transform:scaleX(0.9420);transform-origin:0 0;">30</div><div class="t" style="left:1551.54px;top:545px;font-size:13.8px;line-height:15px;color:#000;font-weight:normal;font-style:normal;transform:scaleX(0.9420);transform-origin:0 0;">30</div><div class="t" style="left:1641.54px;top:545px;font-size:13.8px;line-height:15px;color:#000;font-weight:normal;font-style:normal;transform:scaleX(0.9420);transform-origin:0 0;">30</div><div class="t" style="left:1731.54px;top:545px;font-size:13.8px;line-height:15px;color:#000;font-weight:normal;font-style:normal;transform:scaleX(0.9420);transform-origin:0 0;">30</div><div class="t" style="left:1821.54px;top:545px;font-size:13.8px;line-height:15px;color:#000;font-weight:normal;font-style:normal;transform:scaleX(0.9420);transform-origin:0 0;">30</div><div class="t" style="left:28.00px;top:579px;font-size:13.8px;line-height:15px;color:#000;font-weight:bold;font-style:normal;transform:scaleX(0.9420);transform-origin:0 0;">Chi phí</div><div class="t" style="left:542.86px;top:579px;font-size:13.8px;line-height:15px;color:#000;font-weight:bold;font-style:normal;transform:scaleX(0.9420);transform-origin:0 0;">5,060,475,804</div><div class="t" style="left:944.94px;top:579px;font-size:13.8px;line-height:15px;color:#000;font-weight:bold;font-style:normal;transform:scaleX(0.9420);transform-origin:0 0;">71,559,249</div><div class="t" style="left:1042.94px;top:579px;font-size:13.8px;line-height:15px;color:#000;font-weight:bold;font-style:normal;transform:scaleX(0.9420);transform-origin:0 0;">73,752,427</div><div class="t" style="left:1140.94px;top:579px;font-size:13.8px;line-height:15px;color:#000;font-weight:bold;font-style:normal;transform:scaleX(0.9420);transform-origin:0 0;">75,945,604</div><div class="t" style="left:1230.94px;top:579px;font-size:13.8px;line-height:15px;color:#000;font-weight:bold;font-style:normal;transform:scaleX(0.9420);transform-origin:0 0;">77,390,430</div><div class="t" style="left:1320.94px;top:579px;font-size:13.8px;line-height:15px;color:#000;font-weight:bold;font-style:normal;transform:scaleX(0.9420);transform-origin:0 0;">79,583,607</div><div class="t" style="left:1410.94px;top:579px;font-size:13.8px;line-height:15px;color:#000;font-weight:bold;font-style:normal;transform:scaleX(0.9420);transform-origin:0 0;">81,776,784</div><div class="t" style="left:1500.94px;top:579px;font-size:13.8px;line-height:15px;color:#000;font-weight:bold;font-style:normal;transform:scaleX(0.9420);transform-origin:0 0;">81,724,908</div><div class="t" style="left:1590.94px;top:579px;font-size:13.8px;line-height:15px;color:#000;font-weight:bold;font-style:normal;transform:scaleX(0.9420);transform-origin:0 0;">81,673,031</div><div class="t" style="left:1680.94px;top:579px;font-size:13.8px;line-height:15px;color:#000;font-weight:bold;font-style:normal;transform:scaleX(0.9420);transform-origin:0 0;">81,621,154</div><div class="t" style="left:1770.94px;top:579px;font-size:13.8px;line-height:15px;color:#000;font-weight:bold;font-style:normal;transform:scaleX(0.9420);transform-origin:0 0;">81,569,277</div><div class="t" style="left:1871.94px;top:579px;font-size:13.8px;line-height:15px;color:#000;font-weight:bold;font-style:normal;transform:scaleX(0.9420);transform-origin:0 0;">84,263,400</div><div class="t" style="left:28.00px;top:596px;font-size:13.8px;line-height:15px;color:#000;font-weight:bold;font-style:italic;transform:scaleX(0.9420);transform-origin:0 0;">Định phí (Chi phí cố định)</div><div class="t" style="left:542.86px;top:596px;font-size:13.8px;line-height:15px;color:#000;font-weight:bold;font-style:normal;transform:scaleX(0.9420);transform-origin:0 0;">4,129,413,339</div><div class="t" style="left:944.94px;top:596px;font-size:13.8px;line-height:15px;color:#000;font-weight:bold;font-style:italic;transform:scaleX(0.9420);transform-origin:0 0;">67,069,141</div><div class="t" style="left:1042.94px;top:596px;font-size:13.8px;line-height:15px;color:#000;font-weight:bold;font-style:italic;transform:scaleX(0.9420);transform-origin:0 0;">67,017,264</div><div class="t" style="left:1140.94px;top:596px;font-size:13.8px;line-height:15px;color:#000;font-weight:bold;font-style:italic;transform:scaleX(0.9420);transform-origin:0 0;">66,965,388</div><div class="t" style="left:1231.90px;top:596px;font-size:13.8px;line-height:15px;color:#000;font-weight:bold;font-style:italic;transform:scaleX(0.9420);transform-origin:0 0;">66,913,511</div><div class="t" style="left:1320.94px;top:596px;font-size:13.8px;line-height:15px;color:#000;font-weight:bold;font-style:italic;transform:scaleX(0.9420);transform-origin:0 0;">66,861,634</div><div class="t" style="left:1410.94px;top:596px;font-size:13.8px;line-height:15px;color:#000;font-weight:bold;font-style:italic;transform:scaleX(0.9420);transform-origin:0 0;">66,809,757</div><div class="t" style="left:1500.94px;top:596px;font-size:13.8px;line-height:15px;color:#000;font-weight:bold;font-style:italic;transform:scaleX(0.9420);transform-origin:0 0;">66,757,880</div><div class="t" style="left:1590.94px;top:596px;font-size:13.8px;line-height:15px;color:#000;font-weight:bold;font-style:italic;transform:scaleX(0.9420);transform-origin:0 0;">66,706,004</div><div class="t" style="left:1680.94px;top:596px;font-size:13.8px;line-height:15px;color:#000;font-weight:bold;font-style:italic;transform:scaleX(0.9420);transform-origin:0 0;">66,654,127</div><div class="t" style="left:1770.94px;top:596px;font-size:13.8px;line-height:15px;color:#000;font-weight:bold;font-style:italic;transform:scaleX(0.9420);transform-origin:0 0;">66,602,250</div><div class="t" style="left:1871.94px;top:596px;font-size:13.8px;line-height:15px;color:#000;font-weight:bold;font-style:italic;transform:scaleX(0.9420);transform-origin:0 0;">68,500,000</div><div class="t" style="left:28.00px;top:613px;font-size:13.8px;line-height:15px;color:#000;font-weight:normal;font-style:normal;transform:scaleX(0.9420);transform-origin:0 0;">Thuê mặt bằng</div><div class="t" style="left:359.94px;top:613px;font-size:13.8px;line-height:15px;color:#000;font-weight:normal;font-style:normal;transform:scaleX(0.9420);transform-origin:0 0;">20,000,000</div><div class="t" style="left:434.00px;top:613px;font-size:13.8px;line-height:15px;color:#000;font-weight:normal;font-style:normal;transform:scaleX(0.9420);transform-origin:0 0;">/tháng</div><div class="t" style="left:944.94px;top:613px;font-size:13.8px;line-height:15px;color:#000;font-weight:normal;font-style:normal;transform:scaleX(0.9420);transform-origin:0 0;">20,000,000</div><div class="t" style="left:1042.94px;top:613px;font-size:13.8px;line-height:15px;color:#000;font-weight:normal;font-style:normal;transform:scaleX(0.9420);transform-origin:0 0;">20,000,000</div><div class="t" style="left:1140.94px;top:613px;font-size:13.8px;line-height:15px;color:#000;font-weight:normal;font-style:normal;transform:scaleX(0.9420);transform-origin:0 0;">20,000,000</div><div class="t" style="left:1230.94px;top:613px;font-size:13.8px;line-height:15px;color:#000;font-weight:normal;font-style:normal;transform:scaleX(0.9420);transform-origin:0 0;">20,000,000</div><div class="t" style="left:1320.94px;top:613px;font-size:13.8px;line-height:15px;color:#000;font-weight:normal;font-style:normal;transform:scaleX(0.9420);transform-origin:0 0;">20,000,000</div><div class="t" style="left:1410.94px;top:613px;font-size:13.8px;line-height:15px;color:#000;font-weight:normal;font-style:normal;transform:scaleX(0.9420);transform-origin:0 0;">20,000,000</div><div class="t" style="left:1500.94px;top:613px;font-size:13.8px;line-height:15px;color:#000;font-weight:normal;font-style:normal;transform:scaleX(0.9420);transform-origin:0 0;">20,000,000</div><div class="t" style="left:1590.94px;top:613px;font-size:13.8px;line-height:15px;color:#000;font-weight:normal;font-style:normal;transform:scaleX(0.9420);transform-origin:0 0;">20,000,000</div><div class="t" style="left:1680.94px;top:613px;font-size:13.8px;line-height:15px;color:#000;font-weight:normal;font-style:normal;transform:scaleX(0.9420);transform-origin:0 0;">20,000,000</div><div class="t" style="left:1770.94px;top:613px;font-size:13.8px;line-height:15px;color:#000;font-weight:normal;font-style:normal;transform:scaleX(0.9420);transform-origin:0 0;">20,000,000</div><div class="t" style="left:1871.94px;top:613px;font-size:13.8px;line-height:15px;color:#000;font-weight:normal;font-style:normal;transform:scaleX(0.9420);transform-origin:0 0;">21,000,000</div><div class="t" style="left:28.00px;top:630px;font-size:13.8px;line-height:15px;color:#000;font-weight:normal;font-style:normal;transform:scaleX(0.9420);transform-origin:0 0;">Khấu hao</div><div class="t" style="left:417.77px;top:630px;font-size:13.8px;line-height:15px;color:#000;font-weight:normal;font-style:normal;transform:scaleX(0.9420);transform-origin:0 0;">5</div><div class="t" style="left:434.00px;top:630px;font-size:13.8px;line-height:15px;color:#000;font-weight:normal;font-style:normal;transform:scaleX(0.9420);transform-origin:0 0;">năm</div><div class="t" style="left:944.94px;top:630px;font-size:13.8px;line-height:15px;color:#000;font-weight:normal;font-style:normal;transform:scaleX(0.9420);transform-origin:0 0;">12,510,287</div><div class="t" style="left:1042.94px;top:630px;font-size:13.8px;line-height:15px;color:#000;font-weight:normal;font-style:normal;transform:scaleX(0.9420);transform-origin:0 0;">12,510,287</div><div class="t" style="left:1140.94px;top:630px;font-size:13.8px;line-height:15px;color:#000;font-weight:normal;font-style:normal;transform:scaleX(0.9420);transform-origin:0 0;">12,510,287</div><div class="t" style="left:1230.94px;top:630px;font-size:13.8px;line-height:15px;color:#000;font-weight:normal;font-style:normal;transform:scaleX(0.9420);transform-origin:0 0;">12,510,287</div><div class="t" style="left:1320.94px;top:630px;font-size:13.8px;line-height:15px;color:#000;font-weight:normal;font-style:normal;transform:scaleX(0.9420);transform-origin:0 0;">12,510,287</div><div class="t" style="left:1410.94px;top:630px;font-size:13.8px;line-height:15px;color:#000;font-weight:normal;font-style:normal;transform:scaleX(0.9420);transform-origin:0 0;">12,510,287</div><div class="t" style="left:1500.94px;top:630px;font-size:13.8px;line-height:15px;color:#000;font-weight:normal;font-style:normal;transform:scaleX(0.9420);transform-origin:0 0;">12,510,287</div><div class="t" style="left:1590.94px;top:630px;font-size:13.8px;line-height:15px;color:#000;font-weight:normal;font-style:normal;transform:scaleX(0.9420);transform-origin:0 0;">12,510,287</div><div class="t" style="left:1680.94px;top:630px;font-size:13.8px;line-height:15px;color:#000;font-weight:normal;font-style:normal;transform:scaleX(0.9420);transform-origin:0 0;">12,510,287</div><div class="t" style="left:1770.94px;top:630px;font-size:13.8px;line-height:15px;color:#000;font-weight:normal;font-style:normal;transform:scaleX(0.9420);transform-origin:0 0;">12,510,287</div><div class="t" style="left:1871.94px;top:630px;font-size:13.8px;line-height:15px;color:#000;font-weight:normal;font-style:normal;transform:scaleX(0.9420);transform-origin:0 0;">12,510,287</div><div class="t" style="left:28.00px;top:647px;font-size:13.8px;line-height:15px;color:#000;font-weight:normal;font-style:normal;transform:scaleX(0.9420);transform-origin:0 0;">Lãi vay</div><div class="t" style="left:952.17px;top:647px;font-size:13.8px;line-height:15px;color:#000;font-weight:normal;font-style:normal;transform:scaleX(0.9420);transform-origin:0 0;">3,008,854</div><div class="t" style="left:1050.17px;top:647px;font-size:13.8px;line-height:15px;color:#000;font-weight:normal;font-style:normal;transform:scaleX(0.9420);transform-origin:0 0;">2,956,977</div><div class="t" style="left:1148.17px;top:647px;font-size:13.8px;line-height:15px;color:#000;font-weight:normal;font-style:normal;transform:scaleX(0.9420);transform-origin:0 0;">2,905,100</div><div class="t" style="left:1238.17px;top:647px;font-size:13.8px;line-height:15px;color:#000;font-weight:normal;font-style:normal;transform:scaleX(0.9420);transform-origin:0 0;">2,853,224</div><div class="t" style="left:1328.17px;top:647px;font-size:13.8px;line-height:15px;color:#000;font-weight:normal;font-style:normal;transform:scaleX(0.9420);transform-origin:0 0;">2,801,347</div><div class="t" style="left:1418.17px;top:647px;font-size:13.8px;line-height:15px;color:#000;font-weight:normal;font-style:normal;transform:scaleX(0.9420);transform-origin:0 0;">2,749,470</div><div class="t" style="left:1508.17px;top:647px;font-size:13.8px;line-height:15px;color:#000;font-weight:normal;font-style:normal;transform:scaleX(0.9420);transform-origin:0 0;">2,697,593</div><div class="t" style="left:1598.17px;top:647px;font-size:13.8px;line-height:15px;color:#000;font-weight:normal;font-style:normal;transform:scaleX(0.9420);transform-origin:0 0;">2,645,717</div><div class="t" style="left:1688.17px;top:647px;font-size:13.8px;line-height:15px;color:#000;font-weight:normal;font-style:normal;transform:scaleX(0.9420);transform-origin:0 0;">2,593,840</div><div class="t" style="left:1778.17px;top:647px;font-size:13.8px;line-height:15px;color:#000;font-weight:normal;font-style:normal;transform:scaleX(0.9420);transform-origin:0 0;">2,541,963</div><div class="t" style="left:1879.17px;top:647px;font-size:13.8px;line-height:15px;color:#000;font-weight:normal;font-style:normal;transform:scaleX(0.9420);transform-origin:0 0;">1,490,086</div><div class="t" style="left:28.00px;top:664px;font-size:13.8px;line-height:15px;color:#000;font-weight:normal;font-style:normal;transform:scaleX(0.9420);transform-origin:0 0;">Lương cố định (quản lý, nhân viên full-time...)</div><div class="t" style="left:359.94px;top:664px;font-size:13.8px;line-height:15px;color:#000;font-weight:normal;font-style:normal;transform:scaleX(0.9420);transform-origin:0 0;">25,500,000</div><div class="t" style="left:434.00px;top:664px;font-size:13.8px;line-height:15px;color:#000;font-weight:normal;font-style:normal;transform:scaleX(0.9420);transform-origin:0 0;">/tháng</div><div class="t" style="left:944.94px;top:664px;font-size:13.8px;line-height:15px;color:#000;font-weight:normal;font-style:normal;transform:scaleX(0.9420);transform-origin:0 0;">25,500,000</div><div class="t" style="left:1042.94px;top:664px;font-size:13.8px;line-height:15px;color:#000;font-weight:normal;font-style:normal;transform:scaleX(0.9420);transform-origin:0 0;">25,500,000</div><div class="t" style="left:1140.94px;top:664px;font-size:13.8px;line-height:15px;color:#000;font-weight:normal;font-style:normal;transform:scaleX(0.9420);transform-origin:0 0;">25,500,000</div><div class="t" style="left:1230.94px;top:664px;font-size:13.8px;line-height:15px;color:#000;font-weight:normal;font-style:normal;transform:scaleX(0.9420);transform-origin:0 0;">25,500,000</div><div class="t" style="left:1320.94px;top:664px;font-size:13.8px;line-height:15px;color:#000;font-weight:normal;font-style:normal;transform:scaleX(0.9420);transform-origin:0 0;">25,500,000</div><div class="t" style="left:1410.94px;top:664px;font-size:13.8px;line-height:15px;color:#000;font-weight:normal;font-style:normal;transform:scaleX(0.9420);transform-origin:0 0;">25,500,000</div><div class="t" style="left:1500.94px;top:664px;font-size:13.8px;line-height:15px;color:#000;font-weight:normal;font-style:normal;transform:scaleX(0.9420);transform-origin:0 0;">25,500,000</div><div class="t" style="left:1590.94px;top:664px;font-size:13.8px;line-height:15px;color:#000;font-weight:normal;font-style:normal;transform:scaleX(0.9420);transform-origin:0 0;">25,500,000</div><div class="t" style="left:1680.94px;top:664px;font-size:13.8px;line-height:15px;color:#000;font-weight:normal;font-style:normal;transform:scaleX(0.9420);transform-origin:0 0;">25,500,000</div><div class="t" style="left:1770.94px;top:664px;font-size:13.8px;line-height:15px;color:#000;font-weight:normal;font-style:normal;transform:scaleX(0.9420);transform-origin:0 0;">25,500,000</div><div class="t" style="left:1871.94px;top:664px;font-size:13.8px;line-height:15px;color:#000;font-weight:normal;font-style:normal;transform:scaleX(0.9420);transform-origin:0 0;">26,500,000</div><div class="t" style="left:28.00px;top:681px;font-size:13.8px;line-height:15px;color:#000;font-weight:normal;font-style:normal;transform:scaleX(0.9420);transform-origin:0 0;">Bảo hiểm xã hội</div><div class="t" style="left:367.17px;top:681px;font-size:13.8px;line-height:15px;color:#000;font-weight:normal;font-style:normal;transform:scaleX(0.9420);transform-origin:0 0;">2,500,000</div><div class="t" style="left:434.00px;top:681px;font-size:13.8px;line-height:15px;color:#000;font-weight:normal;font-style:normal;transform:scaleX(0.9420);transform-origin:0 0;">/tháng</div><div class="t" style="left:952.17px;top:681px;font-size:13.8px;line-height:15px;color:#000;font-weight:normal;font-style:normal;transform:scaleX(0.9420);transform-origin:0 0;">2,500,000</div><div class="t" style="left:1050.17px;top:681px;font-size:13.8px;line-height:15px;color:#000;font-weight:normal;font-style:normal;transform:scaleX(0.9420);transform-origin:0 0;">2,500,000</div><div class="t" style="left:1148.17px;top:681px;font-size:13.8px;line-height:15px;color:#000;font-weight:normal;font-style:normal;transform:scaleX(0.9420);transform-origin:0 0;">2,500,000</div><div class="t" style="left:1238.17px;top:681px;font-size:13.8px;line-height:15px;color:#000;font-weight:normal;font-style:normal;transform:scaleX(0.9420);transform-origin:0 0;">2,500,000</div><div class="t" style="left:1328.17px;top:681px;font-size:13.8px;line-height:15px;color:#000;font-weight:normal;font-style:normal;transform:scaleX(0.9420);transform-origin:0 0;">2,500,000</div><div class="t" style="left:1418.17px;top:681px;font-size:13.8px;line-height:15px;color:#000;font-weight:normal;font-style:normal;transform:scaleX(0.9420);transform-origin:0 0;">2,500,000</div><div class="t" style="left:1508.17px;top:681px;font-size:13.8px;line-height:15px;color:#000;font-weight:normal;font-style:normal;transform:scaleX(0.9420);transform-origin:0 0;">2,500,000</div><div class="t" style="left:1598.17px;top:681px;font-size:13.8px;line-height:15px;color:#000;font-weight:normal;font-style:normal;transform:scaleX(0.9420);transform-origin:0 0;">2,500,000</div><div class="t" style="left:1688.17px;top:681px;font-size:13.8px;line-height:15px;color:#000;font-weight:normal;font-style:normal;transform:scaleX(0.9420);transform-origin:0 0;">2,500,000</div><div class="t" style="left:1778.17px;top:681px;font-size:13.8px;line-height:15px;color:#000;font-weight:normal;font-style:normal;transform:scaleX(0.9420);transform-origin:0 0;">2,500,000</div><div class="t" style="left:1879.17px;top:681px;font-size:13.8px;line-height:15px;color:#000;font-weight:normal;font-style:normal;transform:scaleX(0.9420);transform-origin:0 0;">2,600,000</div></div><div class="r" style="left:0px;top:953px;width:1890px;height:1px;background:#a0a0a0;"></div><div class="r" style="left:1889px;top:285px;width:1px;height:669px;background:#a0a0a0;"></div><div class="r" style="left:1890px;top:269px;width:30px;height:685px;background:#e6e6e6;"></div><div class="r" style="left:1892px;top:295px;width:25px;height:658px;background:#f0f0f0;"></div><div class="r" style="left:1892px;top:270px;width:25px;height:25px;background:#fff;border:1px solid #a6a6a6"></div><svg class="r" style="left:1898px;top:278px" width="14" height="8" viewBox="0 0 14 8"><path d="M1 7 L7 1 L13 7 Z" fill="#333"/></svg><div class="r" style="left:1892px;top:294px;width:25px;height:315px;background:#fff;border:1px solid #a6a6a6;border-top:2px solid #9a9a9a"></div><div class="r" style="left:1892px;top:929px;width:25px;height:24px;background:#fff;border:1px solid #a6a6a6"></div><svg class="r" style="left:1898px;top:938px" width="14" height="8" viewBox="0 0 14 8"><path d="M1 1 L13 1 L7 7 Z" fill="#333"/></svg><div class="r" style="left:0px;top:954px;width:1920px;height:34px;background:#e6e6e6;"></div><svg class="r" style="left:24px;top:960px" width="14" height="18" viewBox="0 0 14 18"><path d="M11 3 L4 9 L11 15 Z" fill="#c2c2c2"/></svg><svg class="r" style="left:59px;top:960px" width="14" height="18" viewBox="0 0 14 18"><path d="M4 3 L11 9 L4 15 Z" fill="#c2c2c2"/></svg><div class="r" style="left:118px;top:957px;width:1px;height:26px;background:#8f8f8f;"></div><div class="r" style="left:279px;top:957px;width:1px;height:26px;background:#8f8f8f;"></div><div class="r" style="left:389px;top:957px;width:1px;height:26px;background:#8f8f8f;"></div><div class="r" style="left:571px;top:957px;width:1px;height:26px;background:#8f8f8f;"></div><div class="r" style="left:1090px;top:957px;width:1px;height:26px;background:#8f8f8f;"></div><div class="r" style="left:1267px;top:957px;width:1px;height:26px;background:#8f8f8f;"></div><div class="t" style="left:136.00px;top:958px;font-size:19px;line-height:21px;color:#444;font-weight:normal;font-style:normal;transform:scaleX(1.0119);transform-origin:0 0;">Tóm tắt KQKD</div><div class="t" style="left:296.00px;top:958px;font-size:19px;line-height:21px;color:#444;font-weight:normal;font-style:normal;transform:scaleX(1.0136);transform-origin:0 0;">Diện tích</div><div class="t" style="left:407.00px;top:958px;font-size:19px;line-height:21px;color:#444;font-weight:normal;font-style:normal;transform:scaleX(1.0324);transform-origin:0 0;">Tổng vốn đầu tư</div><div class="t" style="left:591.00px;top:958px;font-size:19px;line-height:21px;color:#444;font-weight:normal;font-style:normal;transform:scaleX(1.0255);transform-origin:0 0;">Thông số kinh doanh</div><div class="t" style="left:931.00px;top:958px;font-size:19px;line-height:21px;color:#444;font-weight:normal;font-style:normal;transform:scaleX(1.0123);transform-origin:0 0;">Độ nhạy 2 chiều</div><div class="t" style="left:1109.00px;top:958px;font-size:19px;line-height:21px;color:#444;font-weight:normal;font-style:normal;transform:scaleX(1.0123);transform-origin:0 0;">Độ nhạy 1 chiều</div><div class="r" style="left:794px;top:953px;width:119px;height:31px;background:#fff;border-left:1px solid #b8b8b8;border-right:1px solid #b8b8b8"></div><div class="r" style="left:794px;top:982px;width:119px;height:2px;background:#217346;"></div><div class="t" style="left:807.00px;top:958px;font-size:19px;line-height:21px;color:#217346;font-weight:bold;font-style:normal;transform:scaleX(1.0617);transform-origin:0 0;">Dòng tiền</div><svg class="r" style="left:1305px;top:957px" width="26" height="26" viewBox="0 0 26 26"><circle cx="13" cy="13" r="10.6" stroke="#7a7a7a" stroke-width="1.3" fill="none"/><path d="M13 8 V18 M8 13 H18" stroke="#6a6a6a" stroke-width="1.7"/></svg><div class="r" style="left:1352px;top:963px;width:3px;height:3px;background:#a8a8a8;"></div><div class="r" style="left:1352px;top:969px;width:3px;height:3px;background:#a8a8a8;"></div><div class="r" style="left:1352px;top:975px;width:3px;height:3px;background:#a8a8a8;"></div><div class="r" style="left:1372px;top:957px;width:516px;height:25px;background:#f0f0f0;"></div><div class="r" style="left:1372px;top:957px;width:26px;height:25px;background:#fff;border:1px solid #a6a6a6"></div><svg class="r" style="left:1379px;top:963px" width="12" height="14" viewBox="0 0 12 14"><path d="M9 1 L2 7 L9 13 Z" fill="#222"/></svg><div class="r" style="left:1397px;top:957px;width:394px;height:25px;background:#fff;border:1px solid #a6a6a6"></div><div class="r" style="left:1863px;top:957px;width:25px;height:25px;background:#fff;border:1px solid #a6a6a6"></div><svg class="r" style="left:1869px;top:963px" width="12" height="14" viewBox="0 0 12 14"><path d="M3 1 L10 7 L3 13 Z" fill="#222"/></svg><div class="r" style="left:0px;top:987px;width:1920px;height:1px;background:#d0d0d0;"></div><div class="r" style="left:0px;top:988px;width:1920px;height:28px;background:#f3f2f1;"></div><div class="t" style="left:11.00px;top:996px;font-size:16px;line-height:17px;color:#444;font-weight:normal;font-style:normal;transform:scaleX(0.9081);transform-origin:0 0;">Ready</div><svg class="r" style="left:76px;top:988px" width="34" height="28" viewBox="0 0 34 28"><g stroke="#444" stroke-width="1.4" fill="none" stroke-linejoin="round"><circle cx="14.5" cy="8.5" r="2.6"/><path d="M10.5 13.3 L7 12 Q5.2 11 6 9.4 Q7 8 9.2 9 Q14.5 11.8 19.8 9 Q22 8 22.9 9.6 Q23.5 11.3 21.8 12.3 L18.3 13.7"/><path d="M10.5 13.3 V19 L8.9 23.3 Q8.6 25.6 10.4 25.6 Q12 25.6 12.5 23.6 L14.3 19 L15.8 22.3"/><path d="M16.3 16.3 L25.7 25.7 M25.7 16.3 L16.3 25.7"/></g></svg><div class="t" style="left:108.00px;top:996px;font-size:16px;line-height:17px;color:#444;font-weight:normal;font-style:normal;transform:scaleX(0.9515);transform-origin:0 0;">Accessibility: Investigate</div><div class="r" style="left:1475px;top:988px;width:60px;height:28px;background:#d4d4d4;"></div><svg class="r" style="left:1492px;top:992px" width="24" height="22" viewBox="0 0 24 22"><g stroke="#444" stroke-width="1.5" fill="none"><rect x="3.5" y="2" width="18" height="18"/><path d="M9.5 2 V20 M15.5 2 V20 M3.5 8 H21.5 M3.5 14 H21.5"/></g></svg><svg class="r" style="left:1553px;top:992px" width="24" height="22" viewBox="0 0 24 22"><g stroke="#444" stroke-width="1.5" fill="none"><rect x="2.2" y="2.2" width="19.3" height="17.5"/><rect x="6.7" y="5.3" width="10.2" height="11.4"/><path d="M9.2 8.2 H14.8 M9.2 11.1 H14.8 M9.2 14.1 H14.8"/></g></svg><svg class="r" style="left:1613px;top:992px" width="24" height="22" viewBox="0 0 24 22"><g stroke="#444" stroke-width="1.6" fill="none"><rect x="2.8" y="2.7" width="19.4" height="17.5"/><path d="M8.1 2.7 V12.5 H2.8 M14.2 2.7 V12.5 H8.1"/></g></svg><div class="r" style="left:1663px;top:1002px;width:11px;height:1.5px;background:#555;"></div><div class="r" style="left:1683px;top:1003px;width:148px;height:2px;background:#555;"></div><div class="r" style="left:1722px;top:994px;width:8px;height:17px;background:#444;"></div><div class="r" style="left:1756px;top:998px;width:2px;height:10px;background:#555;"></div><div class="r" style="left:1838px;top:1003px;width:13px;height:1.5px;background:#555;"></div><div class="r" style="left:1843.7px;top:997px;width:1.5px;height:13px;background:#555;"></div><div class="t" style="left:1869.00px;top:997px;font-size:16px;line-height:17px;color:#444;font-weight:normal;font-style:normal;transform:scaleX(0.9368);transform-origin:0 0;">60%</div>
</body></html>
